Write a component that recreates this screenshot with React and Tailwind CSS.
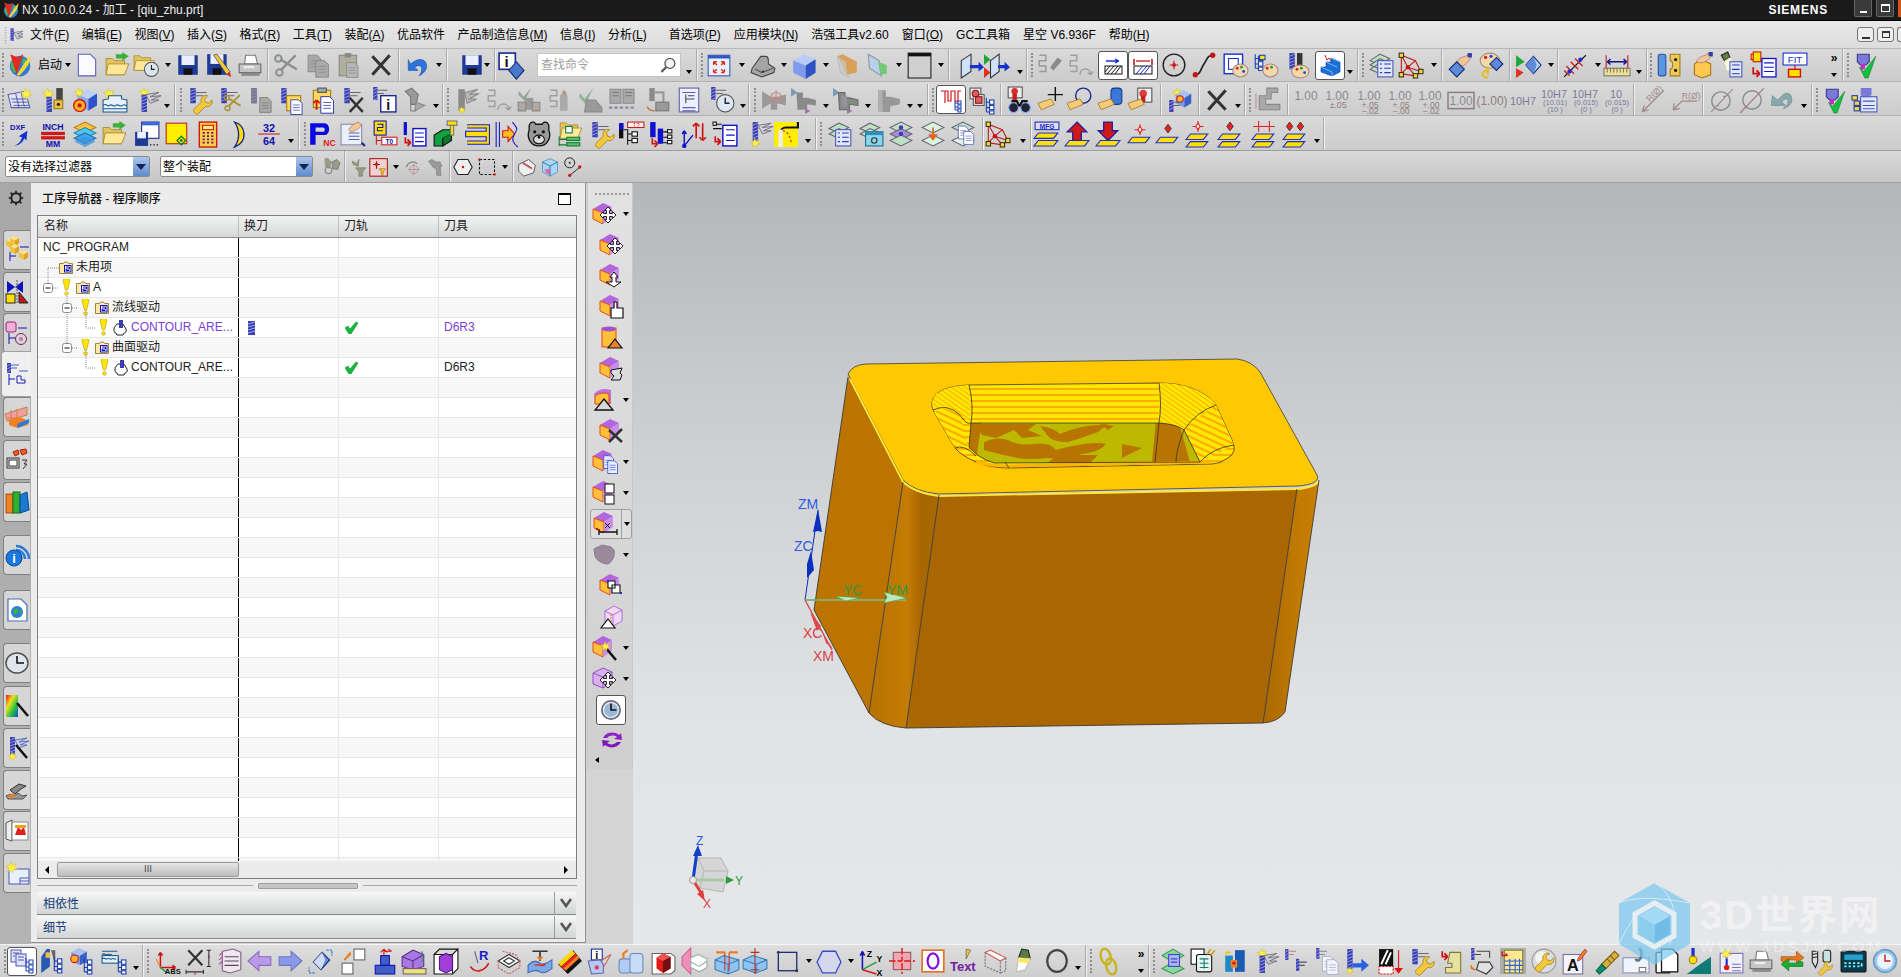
import React from 'react';

// ── small drawing parts shared by the toolbar icons ──
const T = ({ x = 0, y = 0, s = 1, children }) => <g transform={`translate(${x} ${y}) scale(${s})`}>{children}</g>;
const Drill = ({ x = 0, y = 0, w = 5, h = 16 }) => (
    <g>
        <rect x={x} y={y} width={w} height={h} fill="#3a3fb0" />
        {Array.from({ length: Math.floor(h / 3) }, (_, i) => (
            <path key={i} d={`M${x} ${+y + 3 + i * 3}l${w} -2`} stroke="#a4a8ee" strokeWidth=".8" />
        ))}
    </g>
);
const Star = ({ x = 5, y = 5, r = 5 }) => (
    <path d={`M${x} ${y - r}l${r * .25} ${r * .7} ${r * .7} -${r * .3} -${r * .3} ${r * .6} ${r * .6} ${r * .25} -${r * .7} ${r * .2} -${r * .25} ${r * .7} -${r * .3} -${r * .6} -${r * .6} ${r * .3} ${r * .2} -${r * .7} -${r * .6} -${r * .3} ${r * .7} -${r * .15}z`} fill="#ffef4a" stroke="#c8b820" strokeWidth=".4" />
);
const Cube = ({ x = 0, y = 0, s = 1, t = '#9fb8f4', l = '#7d9cec', r = '#2f55c8' }) => (
    <T x={x} y={y} s={s}>
        <path d="M0 5L9 0l9 4-8 5z" fill={t} />
        <path d="M0 5l10 4v11L0 15z" fill={l} />
        <path d="M10 9l8-5v11l-8 5z" fill={r} />
    </T>
);
const PCube = ({ x = 0, y = 0, s = 1 }) => (
    <T x={x} y={y} s={s}>
        <path d="M0 6L10 0l9 4-9 6z" fill="#b265dc" />
        <path d="M0 6l10 4v11L0 16z" fill="#ffc03a" stroke="#e8400a" strokeWidth=".9" />
        <path d="M10 10l9-6v11l-9 6z" fill="#c88ee8" />
    </T>
);
const Move4 = () => (
    <path d="M15 5l3.500 3.500h-2v3h3v-2l3.500 3.500-3.500 3.500v-2h-3v3h2L15 21l-3.500-3.500h2v-3h-3v2L7 13l3.500-3.500v2h3v-3h-2z" fill="#fff" stroke="#111" strokeWidth=".9" />
);
const Folder = ({ x = 0, y = 0, s = 1 }) => (
    <T x={x} y={y} s={s}>
        <path d="M1 5h6l2 2h9v13H1z" fill="#e4c45c" stroke="#a58a30" strokeWidth=".8" />
        <path d="M3 10h19l-4 10H1z" fill="#ffe89a" stroke="#a58a30" strokeWidth=".8" />
    </T>
);
const Doc = ({ x = 0, y = 0, s = 1, c = '#6a6ac8', f = '#fff' }) => (
    <T x={x} y={y} s={s}>
        <path d="M1 1h9l4 4v13H1z" fill={f} stroke={c} />
        <path d="M3.500 7h8M3.500 10h8M3.500 13h8" stroke={c} strokeWidth=".8" />
    </T>
);
const Wrench = ({ x = 0, y = 0, s = 1 }) => (
    <T x={x} y={y} s={s}>
        <path d="M1 15l7-7c-1-4 2-7 6-6l-3 3 1 3 3 1 3-3c1 4-2 7-6 6l-7 7c-1 1-5-2-4-4z" fill="#f4c83c" stroke="#a07a10" strokeWidth=".7" />
    </T>
);
const Fan = ({ x = 0, y = 0, c = '#6b6b78' }) => (
    <T x={x} y={y}>
        <path d="M0 2l12-2-8 4 10-1-9 4 7 0-8 3z" fill="#cfd0dc" stroke={c} strokeWidth=".8" />
    </T>
);
const Scissors = ({ x = 0, y = 0, s = 1, c = '#8a8f8a' }) => (
    <T x={x} y={y} s={s}>
        <path d="M20 2L7 15M21 15L6 6" stroke={c} strokeWidth="2.200" fill="none" />
        <circle cx="5" cy="18" r="3" fill="none" stroke={c} strokeWidth="1.800" />
        <circle cx="4" cy="5" r="3" fill="none" stroke={c} strokeWidth="1.800" />
    </T>
);
const TreeB = ({ x = 0, y = 0, c = '#1c3fb0' }) => (
    <T x={x} y={y}>
        <path d="M2 0v13M2 4h3M2 9h3M2 13h3" stroke={c} fill="none" />
        <rect x="5" y="2" width="4" height="4" fill="#fff" stroke={c} />
        <rect x="5" y="7" width="4" height="4" fill="#fff" stroke={c} />
        <rect x="5" y="12" width="4" height="3" fill="#fff" stroke={c} />
    </T>
);
const Plate = ({ x = 0, y = 0, w = 16, f = '#ffe000' }) => (
    <path d={`M${+x + 4} ${y}h${w}l-4 5h-${w}z`} fill={f} stroke="#1d2fc0" strokeWidth="1" />
);
const RedD = ({ x = 8, y = 4 }) => <path d={`M${x} ${y - 4}l3 4-3 4-3-4z`} fill="#e22" stroke="#222" strokeWidth=".7" />;
const Tag = ({ x = 0, y = 12 }) => <path d={`M${x} ${+y + 4}l12-4 3 5-12 5z`} fill="#f4cc78" stroke="#a87820" strokeWidth=".8" />;
const Lbl = ({ x, y, z = 7, c = '#000', b, a, children }) => (
    <text x={x} y={y} fontSize={z} fill={c} fontWeight={b ? 700 : 400} textAnchor={a || 'start'}>{children}</text>
);
const Dim = ({ a, b, c }) => (
    <g>
        <Lbl x="12" y="12" z="11" c="#8a8a90" a="middle">{a}</Lbl>
        {b && <Lbl x="13" y="19" z="8" c="#8f7f80" a="middle">{b}</Lbl>}
        {c && <Lbl x="13" y="25" z="8" c="#8f7f80" a="middle">{c}</Lbl>}
    </g>
);
const Fit = ({ a, b, c }) => (
    <g>
        <Lbl x="12" y="10" z="10" c="#7b7b98" a="middle">{a}</Lbl>
        <Lbl x="13" y="17" z="7" c="#7b7b98" a="middle">{b}</Lbl>
        <Lbl x="13" y="23" z="7" c="#7b7b98" a="middle">{c}</Lbl>
    </g>
);

const I = {
    logo: <g><circle cx="12" cy="13" r="9.500" fill="#2d78d8" /><path d="M4 9c4-3 6-1 7 3s-2 7-4 7c-3-2-4-6-3-10zM15 6c3 0 5 3 5 7-3 1-5-1-6-3z" fill="#49b84a" /><path d="M3 2l7 3 5-3-3 9-3 10-3-9z" fill="#e22a20" /><path d="M9 21C13 15 17 8 22 3c0 6-5 14-11 19z" fill="#f4d83a" /></g>,
    new: <path d="M4 2h11l5 5v15H4z" fill="#fafaff" stroke="#5a62c8" />,
    open: <g><Folder y="1" /><path d="M10 2h6V0l6 4-6 4V6h-6z" fill="#3fae3a" /></g>,
    recent: <g><Folder y="-1" s=".9" /><circle cx="17" cy="16" r="6.500" fill="#dce4ee" stroke="#555" /><path d="M17 12v4h3" stroke="#222" fill="none" /></g>,
    save: <g><rect x="3" y="3" width="18" height="18" fill="#1e3a94" /><rect x="6" y="3" width="12" height="9" fill="#eaf0ff" /><rect x="8" y="15" width="8" height="6" fill="#111" /></g>,
    saveas: <g><rect x="2" y="2" width="18" height="19" fill="#1e3a94" /><rect x="5" y="2" width="12" height="9" fill="#eaf0ff" /><rect x="7" y="15" width="8" height="6" fill="#111" /><path d="M8 3l3-1 12 16-3 3z" fill="#f4c83c" stroke="#333" strokeWidth=".6" /><path d="M20 21l3-3 1 5z" fill="#d22" /></g>,
    print: <g><path d="M8 3h9l2 8H7z" fill="#fff" stroke="#777" /><path d="M2 11h20v8H2z" fill="#c4c4c4" stroke="#666" /><path d="M4 19h17v3H4z" fill="#8a8a8a" /><rect x="6" y="13" width="10" height="2" fill="#eee" /></g>,
    cutG: <Scissors y="1" />,
    copyG: <g><Doc x="2" y="2" s=".9" c="#8a8a88" f="#a8a8a8" /><Doc x="9" y="7" s=".9" c="#8a8a88" f="#aaa" /></g>,
    pasteG: <g><rect x="3" y="3" width="16" height="19" fill="#b0ae9c" stroke="#888" /><rect x="8" y="1" width="6" height="4" fill="#888" /><Doc x="9" y="9" s=".8" c="#888" f="#b8b8b8" /></g>,
    xdark: <path d="M4 4l16 17M20 3L4 21" stroke="#333" strokeWidth="2.800" fill="none" />,
    undo: <g><path d="M8 9c6-4 12-2 12 4 0 4-3 7-7 9 3-4 3-8 1-9-2-1-4 0-5 1l3 3H3V7l2 4z" fill="#2c74dc" stroke="#1a4aa0" strokeWidth=".5" /></g>,
    infoD: <g><rect x="1" y="1" width="15" height="15" fill="#fff" stroke="#1a2a90" strokeWidth="1.500" /><Lbl x="8" y="14" z="14" c="#111" b a="middle">i</Lbl><path d="M17 9l7 8-7 8-7-8z" fill="#4a78cc" stroke="#122a78" /></g>,
    fit: <g><rect x="2" y="3" width="20" height="19" fill="#e8f0fc" stroke="#3558c0" /><rect x="2" y="3" width="20" height="3" fill="#3558c0" /><path d="M7 9l3 3M7 9h3M7 9v3M17 9l-3 3M17 9h-3M17 9v3M7 19l3-3M7 19h3M7 19v-3M17 19l-3-3M17 19h-3M17 19v-3" stroke="#e02a1a" strokeWidth="1.200" fill="none" /></g>,
    shadeG: <g><path d="M2 15L10 4h5c2 0 2 3 2 7l6 4-1 4-11 4-10-4z" fill="#a5a5a5" stroke="#444" /><path d="M5 16l6 3 10-4" stroke="#555" fill="none" /><circle cx="12" cy="18" r="1" fill="#333" /></g>,
    cubeB: <Cube x="2" y="2" s="1.150" t="#b9ccf6" l="#7e9bec" r="#2d52c4" />,
    orangeG: <g><path d="M4 4l5-2 13 7v10l-9 2z" fill="#d8a058" /><path d="M4 4l3 15 8 4" stroke="#bbb" fill="none" /><path d="M4 4l3 15 6 2-1-12z" fill="#c8c8c8" opacity=".7" /></g>,
    clipG: <g><path d="M4 2l10 6 2 14-11-7z" fill="#b9d0e8" stroke="#8a9aa8" /><path d="M13 9l8 3v8l-6 1z" fill="#72c878" /></g>,
    rectBox: <g><rect x="2" y="1" width="21" height="23" fill="#d0d0d0" stroke="#222" /><rect x="2" y="1" width="21" height="3" fill="#111" /></g>,
    docArr: <g><path d="M3 8l9-6v16l-9 6z" fill="#cfe0fa" stroke="#333" /><path d="M11 12h8v-3l5 5-5 4v-3h-8z" fill="#1a30d0" /></g>,
    docArr2: <g><path d="M0 2l6 5-6 5z" fill="#22a83a" /><path d="M0 14l6 5-6 5z" fill="#e03020" /><path d="M6 8l8-6v16l-8 6z" fill="#cfe0fa" stroke="#333" /><path d="M13 12h6v-3l5 5-5 4v-3h-6z" fill="#1a30d0" /></g>,
    sFlash: <g><path d="M3 3h6v5H3v5h6v5H3" stroke="#9a9a9a" strokeWidth="1.400" fill="none" /><path d="M13 14l7-9 4 3-8 9z" fill="#8a8a8a" /></g>,
    sArr: <g><path d="M3 3h6v5H3v5h6v5H3" stroke="#a0a0a0" strokeWidth="1.400" fill="none" /><path d="M12 21c0-7 10-7 10 0M22 21l-3-2M22 21l2-3" stroke="#a0a0a0" strokeWidth="1.400" fill="none" /></g>,
    cutA: <g><path d="M5 8h13M18 8l-4-2M18 8l-4 2" stroke="#1a30d0" strokeWidth="1.300" fill="none" /><rect x="4" y="13" width="17" height="8" fill="#fff" stroke="#111" /><path d="M6 21l7-8M10 21l7-8M14 21l6-8M4 19l5-6" stroke="#111" fill="none" /></g>,
    cutB: <g><path d="M5 8h14" stroke="#c01818" strokeWidth="1.300" /><path d="M3 12V6M21 12V6" stroke="#c01818" strokeWidth="1.600" /><rect x="3" y="13" width="18" height="8" fill="#fff" stroke="#111" /><path d="M5 21l7-8M9 21l7-8M13 21l6-8" stroke="#1a30d0" fill="none" /></g>,
    circR: <g><circle cx="12" cy="12" r="10" fill="none" stroke="#222" strokeWidth="1.300" /><circle cx="12" cy="12" r="1.800" fill="#d01818" /><path d="M12 8v8M8 12h8" stroke="#d01818" /></g>,
    curveR: <g><path d="M4 21c5 0 5-6 8-10 3-4 3-8 8-8" stroke="#222" strokeWidth="1.600" fill="none" /><circle cx="4" cy="21" r="2.500" fill="#c01818" /><circle cx="20" cy="3" r="2.500" fill="#c01818" /></g>,
    palette: <g><rect x="2" y="2" width="17" height="18" fill="#fff" stroke="#1a30d0" strokeWidth="1.300" /><rect x="6" y="6" width="9" height="10" fill="none" stroke="#1a30d0" /><ellipse cx="17" cy="17" rx="7" ry="6" fill="#f0d8a8" stroke="#a88" /><circle cx="14" cy="15" r="1.300" fill="#e02020" /><circle cx="18" cy="14" r="1.300" fill="#20a030" /><circle cx="20" cy="18" r="1.300" fill="#2040e0" /></g>,
    treePal: <g><TreeB x="1" y="2" /><rect x="7" y="3" width="5" height="4" fill="#ffe000" stroke="#1c3fb0" /><ellipse cx="17" cy="17" rx="7" ry="6" fill="#f0d8a8" stroke="#a88" /><circle cx="14" cy="15" r="1.300" fill="#e02020" /><circle cx="18" cy="14" r="1.300" fill="#20a030" /></g>,
    millPal: <g><Drill x="5" y="1" w="5" h="15" /><rect x="12" y="1" width="5" height="13" fill="#333" /><ellipse cx="15" cy="18" rx="8" ry="6" fill="#f0d8a8" stroke="#a88" /><circle cx="12" cy="16" r="1.300" fill="#e02020" /><circle cx="16" cy="15" r="1.300" fill="#20a030" /><circle cx="19" cy="19" r="1.300" fill="#2040e0" /></g>,
    stairs: <g><path d="M3 14h5v-5h5V5l9 4v10l-8 4-11-4z" fill="#1a70d8" stroke="#0a3a90" strokeWidth=".6" /><path d="M3 14l11 5v4M8 9l11 5M13 5l9 4" stroke="#7ab8f4" fill="none" /><path d="M7 2l2 5 2-2 2 3" stroke="#d02020" fill="none" /></g>,
    layersList: <g><path d="M2 8l9-6 9 4-9 6z" fill="#bde2c4" stroke="#667" /><path d="M2 12l9-6 9 4-9 6zM2 16l9-6 9 4-9 6z" fill="#bde2c4" stroke="#667" /><rect x="9" y="8" width="14" height="15" fill="#e2e8fc" stroke="#4a58b8" /><path d="M11 11h2M15 11h6M11 15h2M15 15h6M11 19h2M15 19h6" stroke="#2a38a8" /></g>,
    polyNet: <g><path d="M4 3l13 5 5 10-5 4-13-2zM4 3l6 11 7-6M10 14l-6 6M10 14l7 8M10 14l12 4" stroke="#c01818" fill="none" /><g fill="#ffd830" stroke="#331"><rect x="2" y="1" width="4" height="4" /><rect x="2" y="19" width="4" height="4" /><rect x="15" y="20" width="4" height="4" /><rect x="20" y="16" width="4" height="4" /></g><circle cx="10" cy="14" r="2" fill="#c01818" /></g>,
    handD: <g><path d="M9 11c1-6 5-6 8-7l3-2 2 3-2 3c-2 3-4 5-7 5z" fill="#f0c898" stroke="#a66" strokeWidth=".6" /><rect x="19" y="1" width="4" height="4" fill="#3040a8" /><path d="M9 11l7 7-7 7-7-7z" fill="#5e8ad8" stroke="#102a78" transform="translate(0 -2)" /></g>,
    palKey: <g><ellipse cx="11" cy="8" rx="9" ry="7" fill="#f4dca8" stroke="#a88" /><circle cx="7" cy="5" r="1.500" fill="#e02020" /><circle cx="12" cy="4" r="1.500" fill="#2040e0" /><path d="M17 5l6 6-6 6-6-6z" fill="#5e8ad8" stroke="#102a78" /><path d="M9 13v8M9 23a3 3 0 1 1 0-5" stroke="#e8bc30" strokeWidth="2" fill="none" /></g>,
    playD: <g><path d="M1 3l8 6-8 5z" fill="#20a83a" /><path d="M1 15l7 4-7 5z" fill="#e03020" /><path d="M17 4l7 8-7 8-7-8z" fill="#c0d0f4" stroke="#102a78" /><path d="M17 4l3 8-3 8-7-8z" fill="#5e8ad8" /></g>,
    antenna: <g><path d="M2 23L22 3" stroke="#111" /><path d="M4 13l7 7M8 9l7 7M12 6l7 7M2 17l5 5" stroke="#d02020" strokeWidth="1.300" /><circle cx="17" cy="7" r="2" fill="#1a30d0" /><circle cx="7" cy="18" r="2" fill="#1a30d0" /></g>,
    rulerDim: <g><path d="M3 9h18M3 9l3-2.500M3 9l3 2.500M21 9l-3-2.500M21 9l-3 2.500" stroke="#10108a" strokeWidth="1.400" fill="none" /><path d="M2 3v12M22 3v12" stroke="#c01818" /><rect x="0" y="15" width="24" height="7" fill="#f0e090" stroke="#777" /><path d="M3 15v4M6 15v4M9 15v4M12 15v4M15 15v4M18 15v4M21 15v4" stroke="#555" strokeWidth=".7" /></g>,
    tube: <g><rect x="3" y="2" width="7" height="20" rx="2" fill="#5a96e0" stroke="#2a50a0" /><path d="M14 2h9v20h-9v-6c3 0 3-8 0-8z" fill="#f0c858" stroke="#a07a10" /><circle cx="19" cy="7" r="1.500" fill="#222" /><circle cx="19" cy="17" r="1.500" fill="#222" /></g>,
    handBox: <g><path d="M5 11l6-4 9 4v10l-8 3-7-3z" fill="#ffc850" stroke="#b07010" /><path d="M7 9c1-4 5-5 8-6l3-2 3 3-3 3c-3 2-5 3-8 3z" fill="#f0c898" stroke="#a66" strokeWidth=".6" /><rect x="18" y="0" width="4" height="4" fill="#3040a8" /></g>,
    lightList: <g><path d="M3 3l6-3 2 5-5 3z" fill="#5e8040" stroke="#223" /><path d="M6 8l5-3 8 12H8z" fill="#fffbd0" /><rect x="11" y="9" width="11" height="14" fill="#e2e8fc" stroke="#4a58b8" /><path d="M13 12h7M13 16h7M13 20h7" stroke="#2a38a8" /></g>,
    redList: <g><rect x="1" y="2" width="7" height="5" fill="#ffe000" stroke="#d01010" /><rect x="3" y="0" width="7" height="9" fill="#ffe000" stroke="#d01010" /><path d="M3 14v6h6M9 20l-3-3M9 20l-3 3" stroke="#d01010" strokeWidth="1.600" fill="none" /><rect x="11" y="6" width="13" height="17" fill="#fff" stroke="#1010d0" strokeWidth="1.200" /><path d="M13 10h9M13 14h9M13 18h9" stroke="#1010d0" /></g>,
    fitBox: <g><rect x="1" y="1" width="22" height="11" fill="#fff" stroke="#1a30d0" /><Lbl x="12" y="10" z="9" c="#1a30d0" a="middle">FIT</Lbl><path d="M12 12v4" stroke="#d01010" /><rect x="6" y="16" width="11" height="7" fill="#ffe000" stroke="#d01010" strokeWidth="1.300" /></g>,
    check: <g><path d="M4 2h11v7l-3 3h-5l-3-3z" fill="#7a78d8" stroke="#3a3a8a" /><rect x="7" y="11" width="4" height="5" fill="#c030c0" /><path d="M6 14l4 4 11-14-7 20-3 0z" fill="#12c040" stroke="#0a7a28" strokeWidth=".5" /></g>,
    checkTree: <g><path d="M8 1h10v6l-2 3h-6l-2-3z" fill="#7a78d8" /><rect x="10" y="10" width="4" height="3" fill="#c030c0" /><rect x="8" y="9" width="15" height="14" fill="#e2e8fc" stroke="#4a58b8" /><path d="M10 13h11M10 17h11M10 20h11" stroke="#4a58b8" /><rect x="0" y="8" width="5" height="4" fill="#ffd830" stroke="#1c3fb0" /><rect x="2" y="13" width="5" height="4" fill="#ffd830" stroke="#1c3fb0" /><rect x="2" y="18" width="5" height="4" fill="#ffd830" stroke="#1c3fb0" /></g>,

    sheet: <g><path d="M1 7l16-3 4 15H4z" fill="#dfe4f8" stroke="#5a62a8" /><path d="M4 11h14M5 14h14M6 17h14M8 6l3 13M13 5l3 13" stroke="#4a4a9a" strokeWidth=".8" /><Star x="17" y="6" /></g>,
    millKey: <g><Star x="7" y="6" r="5" /><Drill x="6" y="9" w="5" h="14" /><rect x="15" y="1" width="6" height="14" fill="#444" /><rect x="13" y="12" width="8" height="8" fill="#f0c040" stroke="#9a7a10" /><circle cx="17" cy="16" r="1.500" fill="#222" /></g>,
    cubeBomb: <g><Cube x="6" y="2" t="#bcd0f4" l="#8aa8ec" r="#2a54c8" /><circle cx="8" cy="17" r="5.500" fill="#ffb428" stroke="#d01818" strokeWidth="1.300" /><circle cx="8" cy="17" r="2" fill="#d01818" /><Star x="7" y="5" r="4" /></g>,
    water: <g><Star x="6" y="6" r="5" /><path d="M1 12l5-1v-3h12v3l5 1v11H1z" fill="#e8f0fa" stroke="#1a5a8a" /><path d="M1 17c3-3 4 2 6 0s4 2 6 0 4 2 6 0 3 1 4 0M1 20h22" stroke="#1a5a8a" fill="none" /></g>,
    millFan: <g><Star x="9" y="5" r="4.500" /><Drill x="7" y="7" w="5" h="16" /><Fan x="11" y="5" /></g>,
    millWr: <g><Drill x="4" y="1" w="5" h="14" /><path d="M9 5h10M9 8h7" stroke="#667" /><Wrench x="6" y="6" /></g>,
    millSc: <g><Drill x="4" y="1" w="5" h="14" /><path d="M9 5h10M9 8h7" stroke="#667" /><Scissors x="6" y="6" s=".75" c="#a89230" /></g>,
    millCopyG: <g><Drill x="4" y="1" w="5" h="14" /><rect x="4" y="1" width="5" height="14" fill="#8a8a8a" opacity=".8" /><Doc x="11" y="9" s=".8" c="#777" f="#aaa" /></g>,
    millPaste: <g><Drill x="3" y="1" w="5" h="14" /><rect x="8" y="8" width="13" height="14" fill="#ffd860" stroke="#a07a10" /><Doc x="11" y="11" s=".8" c="#2a38a8" /></g>,
    pasteArr: <g><rect x="4" y="3" width="16" height="16" fill="#ffd860" stroke="#a07a10" /><rect x="8" y="1" width="8" height="4" fill="#9aa" stroke="#555" /><Doc x="10" y="8" s=".9" c="#2a38a8" /><path d="M7 12v9M7 12l-3 3M7 12l3 3" stroke="#d01010" strokeWidth="1.600" fill="none" /></g>,
    millX: <g><Drill x="4" y="1" w="5" h="14" /><path d="M9 5h10M9 8h7" stroke="#667" /><path d="M9 10l12 13M21 10L9 23" stroke="#333" strokeWidth="2.200" /></g>,
    millInfo: <g><Drill x="2" y="0" w="4" h="12" /><path d="M6 3h9M6 6h6" stroke="#667" /><rect x="9" y="8" width="14" height="15" fill="#fff" stroke="#1a2a90" strokeWidth="1.300" /><Lbl x="16" y="21" z="13" c="#111" b a="middle">i</Lbl></g>,
    toolG: <g><path d="M3 4l6-3 6 6-2 9H8V9z" fill="#9a9a9a" stroke="#777" /><path d="M13 14l8 3-9 5z" fill="#aaa" stroke="#888" /><path d="M8 16v6h5" stroke="#888" fill="none" /></g>,
    fanG: <g><rect x="4" y="2" width="6" height="20" fill="#8a8a8a" /><path d="M10 5l12-3-8 5 9-1-9 5 7 0-9 4z" fill="#b8b8b8" stroke="#8a8a8a" /><Star x="7" y="21" r="3" /></g>,
    checkBox: <g><path d="M3 4l4 5 7-8-6 12-6-6z" fill="#8fa88f" /><rect x="8" y="10" width="8" height="11" fill="#9a9a9a" /><path d="M2 14h7v8H2zM15 14h7v8h-7z" fill="#b0a8a0" stroke="#888" /></g>,
    sDoc: <g><path d="M3 3h6v5H3v5h6v5H3" stroke="#a0a0a0" strokeWidth="1.400" fill="none" /><path d="M12 8l4-6 3 6v14h-7z" fill="#aaa" /><path d="M14 3l4 2-2 4z" fill="#c09080" /></g>,
    checkMach: <g><path d="M2 6l4 5 8-10-7 15-6-7z" fill="#8fb09a" /><path d="M8 12h8l6 7v4H6z" fill="#9a9a9a" stroke="#888" /></g>,
    booksG: <g><path d="M1 2h10v13H1zM13 2h10v13H13z" fill="#aaa" stroke="#888" /><path d="M3 5h6M3 8h6M15 5h6M15 8h6" stroke="#777" /><path d="M0 19h24" stroke="#88a" strokeWidth="2" strokeDasharray="3 2" /></g>,
    machG: <g><rect x="4" y="1" width="5" height="12" fill="#8a8a8a" /><path d="M9 5h8v10" stroke="#999" strokeWidth="2" fill="none" /><rect x="10" y="14" width="12" height="8" fill="#9a9a9a" stroke="#777" /><path d="M2 18c1 3 3 4 7 4" stroke="#c08060" strokeWidth="1.500" fill="none" /></g>,
    docTool: <g><rect x="3" y="1" width="18" height="22" fill="#eef" stroke="#5a62a8" /><path d="M6 5h12M6 19h12M6 22h12" stroke="#5a62a8" /><path d="M9 7v8M9 11h8M11 8h6" stroke="#445" fill="none" /></g>,
    millClock: <g><Drill x="2" y="0" w="4" h="12" /><path d="M6 3h10M6 6h7" stroke="#667" /><circle cx="15" cy="15" r="8" fill="#dce8f4" stroke="#555" /><path d="M15 10v5h4" stroke="#222" strokeWidth="1.300" fill="none" /></g>,
    targetG: <g><path d="M1 4l8 5h6l8-2v10l-8-2v6H9v-6l-8 5z" fill="#999" /><circle cx="14" cy="10" r="5" fill="none" stroke="#c08a8a" /><path d="M14 3v14M7 10h14" stroke="#c08a8a" /></g>,
    toolA: <g><path d="M0 1l6 4-6 4z" fill="#7a9ab8" /><path d="M5 5h6v5h4l8 2v5l-8-1v5H6z" fill="#8a8a8a" /><path d="M13 20l5 2-5 3z" fill="#a070a8" /></g>,
    toolB: <g><path d="M0 1l6 4-6 4z" fill="#7a9ab8" /><path d="M5 5h6v5h4l8 2v5l-8-1v5H6z" fill="#888" stroke="#666" /><path d="M8 8h5v10H8z" fill="#9494a0" /><path d="M13 20l5 2-5 3z" fill="#a070a8" /></g>,
    toolC: <g><path d="M3 3h7v6h4l9 2v5l-9 2v5H8L3 20z" fill="#989898" /><path d="M3 3h4v20H3z" fill="#b0b0b0" /></g>,
    tree: <g><path d="M2 3h4v12M6 3h3v10h3V3h4v10h3V3h3" stroke="#d01818" strokeWidth="1.200" fill="none" /><path d="M16 13v9M16 15h3M16 19h3M16 22h3" stroke="#1c3fb0" fill="none" /><rect x="19" y="13" width="3" height="3" fill="#fff" stroke="#1c3fb0" /><rect x="19" y="17" width="3" height="3" fill="#fff" stroke="#1c3fb0" /><rect x="19" y="21" width="3" height="3" fill="#fff" stroke="#1c3fb0" /></g>,
    treeBolts: <g><g fill="#eee" stroke="#555"><rect x="1" y="1" width="10" height="10" /><rect x="4" y="7" width="10" height="10" /></g><g fill="#d86060" stroke="#901010"><circle cx="6" cy="6" r="3" /><rect x="6" y="9" width="6" height="6" /></g><TreeB x="14" y="10" /></g>,
    binoc: <g><rect x="2" y="0" width="13" height="10" fill="#eee" stroke="#555" /><circle cx="8" cy="4" r="3" fill="#d83030" /><rect x="6" y="6" width="4" height="6" fill="#c02020" /><circle cx="7" cy="19" r="4.500" fill="#223" stroke="#8af" /><circle cx="18" cy="19" r="4.500" fill="#223" stroke="#8af" /><path d="M5 13h5l2 4h1l2-4h5" stroke="#111" strokeWidth="2" fill="none" /></g>,
    tagPlus: <g><path d="M16 0v13M9 7h14" stroke="#111" strokeWidth="1.300" /><Tag y="11" /></g>,
    tagO: <g><circle cx="15" cy="8" r="7" fill="none" stroke="#1a2a90" strokeWidth="1.300" /><Tag y="11" /></g>,
    tagCyl: <g><rect x="12" y="1" width="10" height="15" rx="3" fill="#3a78d8" stroke="#1a3a90" /><Tag y="11" /></g>,
    tagBox: <g><rect x="9" y="1" width="13" height="13" fill="#eee" stroke="#555" /><circle cx="14" cy="6" r="3.500" fill="#d84040" /><rect x="12" y="8" width="4" height="6" fill="#c02020" /><Tag y="11" /></g>,
    cubeFan: <g><Star x="9" y="5" r="4" /><Cube x="8" y="3" s=".8" t="#a8c0f0" l="#7a9ae8" r="#3a60c8" /><circle cx="12" cy="11" r="3" fill="#ffb428" stroke="#d01818" /><Drill x="2" y="12" w="4" h="11" /><path d="M6 14h8M6 17h6" stroke="#667" /></g>,
    bracket: <g><path d="M3 16V8h7V1h10v4h-6v6H9v5h13v5H3z" fill="#a8a8a8" stroke="#888" /><path d="M0 6v14" stroke="#c09090" /></g>,
    d1: <Dim a="1.00" />,
    d2: <Dim a="1.00" b="±.05" />,
    d3: <Dim a="1.00" b="+.05" c="−.02" />,
    d4: <Dim a="1.00" b="+.05" c="−.00" />,
    d5: <Dim a="1.00" b="+.00" c="−.02" />,
    d6: <g><rect x="0" y="5" width="24" height="15" fill="none" stroke="#8a7a7a" strokeWidth="1.300" /><Lbl x="12" y="17" z="11" c="#8a8a90" a="middle">1.00</Lbl></g>,
    d7: <Lbl x="12" y="17" z="11" c="#8f7f80" a="middle">(1.00)</Lbl>,
    d8: <Lbl x="12" y="17" z="10" c="#7b7b98" a="middle">10H7</Lbl>,
    d9: <Fit a="10H7" b="(10.01)" c="(10   )" />,
    d10: <Fit a="10H7" b="(0.015)" c="(0     )" />,
    d11: <Fit a="10" b="(0.015)" c="(0     )" />,
    rA: <g><path d="M2 23L22 3M2 23l6-2M2 23l2-6" stroke="#a08a8a" fill="none" strokeWidth="1.200" /><text x="0" y="0" fontSize="8" fill="#a08a8a" transform="translate(9 14) rotate(-45)">R(Ø)</text></g>,
    rB: <g><path d="M2 21l8-8h14M2 21l6-1M2 21l1-6" stroke="#a08a8a" fill="none" strokeWidth="1.200" /><Lbl x="10" y="11" z="8" c="#a08a8a">R(Ø)</Lbl></g>,
    dia: <g><circle cx="11" cy="13" r="8.500" fill="none" stroke="#8a8a8a" strokeWidth="1.300" /><path d="M2 23L22 2M6 18l3-1M16 8l-3 1" stroke="#9a8a8a" /></g>,
    noDia: <g><circle cx="12" cy="12" r="8.500" fill="none" stroke="#8a8a8a" strokeWidth="1.300" /><path d="M1 24L23 1" stroke="#a08080" strokeWidth="1.200" /></g>,
    backG: <path d="M9 12l5-5c5-3 8 0 8 5 0 4-4 7-8 8l3-3c2-2 2-6 0-6-2 0-4 2-4 3l3 3H3l1-9z" fill="#87a8ac" stroke="#6a8a8e" strokeWidth=".6" />,

    dxf: <g><Lbl x="1" y="8" z="7" c="#1010b0" b>DXF</Lbl><path d="M5 23c4-2 6-4 7-8l-3-1 8-5-1 9-2-2c-1 3-3 6-9 7z" fill="#1030d0" /></g>,
    inch: <g><Lbl x="12" y="8" z="8" c="#1010b0" b a="middle">INCH</Lbl><rect x="1" y="10" width="22" height="3" fill="#d01818" /><rect x="1" y="14" width="22" height="3" fill="#d01818" /><Lbl x="12" y="24" z="8" c="#1010b0" b a="middle">MM</Lbl></g>,
    layers: <g><path d="M2 6l10-5 10 5-10 5z" fill="#ffc040" stroke="#b08020" /><path d="M2 11l10-5 10 5-10 5z" fill="#50c8f0" stroke="#2088b8" /><path d="M2 16l10-5 10 5-10 5z" fill="#40a8e8" stroke="#2070b0" /><path d="M2 19l10-5 10 5-10 5z" fill="#3a90e0" opacity=".7" /></g>,
    saveWin: <g><rect x="7" y="1" width="16" height="15" fill="#fff" stroke="#1a2a90" /><rect x="7" y="1" width="16" height="3" fill="#3a68d8" /><rect x="1" y="10" width="12" height="13" fill="#1e3a94" /><rect x="3" y="10" width="8" height="6" fill="#eaf0ff" /><path d="M15 22h1M18 22h1M21 22h1" stroke="#111" strokeWidth="1.400" /></g>,
    yellowSq: <g><rect x="2" y="2" width="19" height="19" fill="#ffee00" stroke="#c02020" /><path d="M16 14l4 4-4 4-4-4z" fill="none" stroke="#107a30" strokeWidth="1.200" /><circle cx="16" cy="18" r="1.300" fill="#107a30" /></g>,
    calc: <g><rect x="4" y="1" width="16" height="23" fill="#ffd040" stroke="#d01818" strokeWidth="1.300" /><rect x="7" y="4" width="10" height="4" fill="#ffe890" stroke="#d01818" /><path d="M7 11h2M11 11h2M15 11h2M7 14h2M11 14h2M15 14h2M7 17h2M11 17h2M15 17h2M7 20h2M11 20h2M15 20h2" stroke="#601880" strokeWidth="1.600" /></g>,
    moon: <path d="M7 1c10 2 13 18 0 23 5-7 5-16 0-23z" fill="#ffe000" stroke="#1a2a90" strokeWidth="1.300" />,
    frac: <g><Lbl x="12" y="10" z="10" c="#1010b0" b a="middle">32</Lbl><path d="M2 12h20" stroke="#d01818" /><Lbl x="12" y="22" z="10" c="#1010b0" b a="middle">64</Lbl></g>,
    pnc: <g><path d="M2 2h13c6 0 6 11 0 11H7v9H2zM7 6v4h7c2 0 2-4 0-4z" fill="#0a0ae0" /><Lbl x="14" y="23" z="8" c="#e02020" b>NC</Lbl></g>,
    handForm: <g><rect x="1" y="3" width="19" height="19" fill="#e8f0fc" stroke="#8a8aa8" /><path d="M8 11h10M8 14h10M8 17h10" stroke="#5a62a8" /><path d="M8 8c2-4 6-6 9-7l3 3c-2 3-5 5-10 6z" fill="#f0c898" stroke="#a66" strokeWidth=".6" /><path d="M20 20l3 3" stroke="#1a2a90" strokeWidth="2" /></g>,
    tBox: <g><rect x="2" y="0" width="11" height="13" fill="#ffe000" stroke="#1010b0" /><path d="M5 3h5v3H5v3h5" stroke="#1010b0" fill="none" /><path d="M4 13v9M4 18h5" stroke="#d01818" /><rect x="9" y="15" width="14" height="7" fill="#fff" stroke="#d01818" /><Lbl x="16" y="21" z="6" c="#1010b0" b a="middle">T0</Lbl></g>,
    listArr: <g><path d="M4 1v12" stroke="#1010d0" strokeWidth="3" /><path d="M4 15v5h5M9 20l-3-3M9 20l-3 3" stroke="#d01010" strokeWidth="1.500" fill="none" /><rect x="11" y="7" width="12" height="16" fill="#fff" stroke="#1010d0" strokeWidth="1.300" /><path d="M13 11h8M13 15h8M13 19h8" stroke="#1010d0" /></g>,
    greenBox: <g><path d="M2 13l8-5h7l1 4-8 4v7H2z" fill="#12a040" stroke="#111" /><path d="M10 16v7l8-5v-6" fill="#0a7a28" stroke="#111" /><rect x="14" y="0" width="9" height="4" fill="#ffe000" stroke="#777" /><rect x="17" y="4" width="3" height="9" fill="#ffe000" stroke="#777" /></g>,
    sShape2: <g><path d="M3 5h19v6H3v2h19v7H3" fill="none" stroke="#1a1ac8" strokeWidth="4" /><path d="M3 5h19v6H3v2h19v7H3" fill="none" stroke="#ffe000" strokeWidth="2" /></g>,
    arrowWave: <g><path d="M2 1v23M5 1v23" stroke="#1a1ac8" /><path d="M8 9h5V5l6 7-6 7v-4H8z" fill="#ffc020" stroke="#d01818" /><path d="M17 1c5 6 5 6 2 11s-2 8 3 12" stroke="#1a1ac8" fill="none" /></g>,
    bear: <g><path d="M4 2a3 3 0 0 1 5 1h6a3 3 0 0 1 5-1c2 2 1 4 1 6 3 8-2 15-9 15S0 16 3 8c0-2-1-4 1-6z" fill="#999" stroke="#111" strokeWidth="1.200" /><circle cx="8" cy="10" r="1.500" fill="#111" /><circle cx="16" cy="10" r="1.500" fill="#111" /><ellipse cx="12" cy="17" rx="5" ry="4" fill="#ddd" stroke="#111" /><circle cx="12" cy="15" r="1.300" fill="#111" /></g>,
    folderTree: <g><Folder y="-3" x="2" s=".95" /><rect x="8" y="5" width="6" height="6" fill="#fff" stroke="#107a30" /><path d="M2 14v9M2 17h7M2 22h7" stroke="#107a30" fill="none" /><rect x="9" y="15" width="12" height="3" fill="#5ac070" stroke="#107a30" /><rect x="9" y="20" width="12" height="3" fill="#5ac070" stroke="#107a30" /></g>,
    mTree: <g><rect x="0" y="2" width="4" height="14" fill="#111" /><rect x="0" y="2" width="4" height="6" fill="#1010d0" /><path d="M4 8h4v14M8 12h4M8 18h4" stroke="#111" fill="none" /><rect x="8" y="1" width="15" height="5" fill="#fff" stroke="#d01818" /><Lbl x="16" y="6" z="6" c="#d01818" a="middle">12</Lbl><rect x="12" y="10" width="5" height="4" fill="#fff" stroke="#111" /><rect x="12" y="16" width="5" height="4" fill="#fff" stroke="#111" /></g>,
    barTree: <g><rect x="2" y="1" width="5" height="14" fill="#1010d0" /><path d="M4 16v5h5M9 21l-3-3M9 21l-3 3" stroke="#d01010" strokeWidth="1.500" fill="none" /><rect x="9" y="7" width="5" height="14" fill="#1010d0" /><path d="M14 10h4M14 15h4M14 20h4" stroke="#111" /><rect x="18" y="8" width="4" height="3" fill="#fff" stroke="#111" /><rect x="18" y="13" width="4" height="3" fill="#fff" stroke="#111" /><rect x="18" y="18" width="4" height="3" fill="#fff" stroke="#111" /></g>,
    axesArr: <g><path d="M3 23V9M3 9L1 12M3 9l2 3M3 23l8-10" stroke="#1010d0" strokeWidth="1.300" fill="none" /><circle cx="3" cy="23" r="2" fill="#1010d0" /><path d="M14 16V2M14 2l-3 3M14 2l3 3" stroke="#d01010" strokeWidth="1.500" fill="none" /><path d="M20 2v16M20 18l-3-3M20 18l3-3" stroke="#d01010" strokeWidth="1.500" fill="none" /></g>,
    listTree: <g><rect x="1" y="1" width="3" height="3" fill="#fff" stroke="#111" /><path d="M4 3h5M4 7h5M1 7h3" stroke="#111" /><path d="M3 14v5h5M8 19l-3-3M8 19l-3 3" stroke="#d01010" strokeWidth="1.500" fill="none" /><rect x="10" y="4" width="13" height="19" fill="#fff" stroke="#1010d0" strokeWidth="1.300" /><path d="M13 8h8M13 13h8M13 18h8" stroke="#1010d0" /></g>,
    millStar: <g><Drill x="8" y="1" w="5" h="18" /><Fan x="13" y="2" /><Star x="10" y="20" r="4" /></g>,
    curveY: <g><rect x="1" y="1" width="22" height="23" fill="#ffee00" /><path d="M7 24V11c0-3 2-5 5-5h11V1" fill="none" stroke="#111" strokeWidth="2" /><rect x="5" y="8" width="4" height="16" fill="#eee" /><path d="M9 9c4 0 7 5 8 12" stroke="#d01818" strokeDasharray="2 2" fill="none" /></g>,
    layL: <g><path d="M2 7l9-5 9 4-9 5z" fill="#bde2c4" stroke="#667" /><path d="M2 12l9-5 9 4-9 5z" fill="#bde2c4" stroke="#667" /><rect x="8" y="8" width="14" height="15" fill="#e2e8fc" stroke="#4a58b8" /><path d="M10 11h2M14 11h6M10 15h2M14 15h6M10 19h2M14 19h6" stroke="#2a38a8" /></g>,
    layW: <g><path d="M2 7l9-5 9 4-9 5z" fill="#bde2c4" stroke="#667" /><path d="M2 12l9-5 9 4-9 5z" fill="#bde2c4" stroke="#667" /><rect x="7" y="10" width="16" height="13" fill="#8ad4ec" stroke="#1a6a90" /><rect x="7" y="10" width="16" height="3" fill="#2a90b8" /><circle cx="15" cy="18" r="2.500" fill="none" stroke="#333" /></g>,
    layS: <g><path d="M2 6l10-5 10 5-10 5z" fill="#bde2c4" stroke="#667" /><path d="M2 12l10-5 10 5-10 5z" fill="#a090d8" stroke="#667" /><path d="M2 18l10-5 10 5-10 5z" fill="#bde2c4" stroke="#667" /><circle cx="12" cy="6" r="2" fill="#5030b0" /><circle cx="12" cy="12" r="2" fill="#5030b0" /></g>,
    layD: <g><path d="M2 6l10-5 10 5-10 5z" fill="#d8f4dc" stroke="#667" /><path d="M2 18l10-5 10 5-10 5z" fill="#d8f4dc" stroke="#667" /><path d="M12 6v9M12 17l-3-4h6z" fill="#e06020" stroke="#e06020" strokeWidth="1.500" /></g>,
    layDoc: <g><path d="M2 6l10-5 10 5-10 5z" fill="#bde2c4" stroke="#667" /><path d="M2 18l10-5 10 5-10 5z" fill="#e2f4e4" stroke="#667" /><Doc x="7" y="4" s=".7" c="#4a58b8" /><Doc x="12" y="9" s=".7" c="#4a58b8" /></g>,
    mfg: <g><rect x="1" y="1" width="22" height="7" fill="#dde" stroke="#1d2fc0" /><Lbl x="12" y="7" z="6" c="#1d2fc0" b a="middle">MFG</Lbl><Plate x="0" y="11" w="18" /><Plate x="0" y="18" w="18" /></g>,
    upY: <g><path d="M12 1l9 9h-5v8H8v-8H3z" fill="#d01818" stroke="#2020a0" strokeWidth="1.200" /><Plate x="1" y="18" w="18" /></g>,
    downY: <g><path d="M12 18l9-9h-5V1H8v8H3z" fill="#d01818" stroke="#2020a0" strokeWidth="1.200" /><Plate x="1" y="18" w="18" /></g>,
    sp1: <g><path d="M12 3v10M7 8h10" stroke="#e02020" /><path d="M12 5l2 3-2 3-2-3z" fill="#fff" stroke="#e02020" /><Plate x="1" y="15" w="16" /></g>,
    sp2: <g><RedD x="12" y="7" /><Plate x="1" y="15" w="16" /></g>,
    sp3: <g><path d="M12 0v10M7 5h10" stroke="#e02020" /><path d="M12 2l2 3-2 3-2-3z" fill="#fff" stroke="#e02020" /><Plate x="1" y="12" w="16" /><Plate x="1" y="19" w="16" /></g>,
    sp4: <g><RedD x="12" y="5" /><Plate x="1" y="12" w="16" /><Plate x="1" y="19" w="16" /></g>,
    sp5: <g><path d="M7 0v10M2 5h10M17 0v10M12 5h10" stroke="#e02020" /><Plate x="1" y="12" w="16" /><Plate x="1" y="19" w="16" /></g>,
    sp6: <g><RedD x="7" y="5" /><RedD x="17" y="5" /><Plate x="1" y="12" w="16" /><Plate x="1" y="19" w="16" /></g>,

    bolts: <g><path d="M4 2l4-1 5 5-3 8-5-2z" fill="#9a9a8a" /><path d="M13 6l6-3 4 4-3 8-6-1z" fill="#9a9a8a" stroke="#777" /><circle cx="9" cy="16" r="4" fill="none" stroke="#888" strokeWidth="1.500" /></g>,
    filtG: <g><path d="M4 5l5 3 3-5-1 8-6-2zM8 13h12l-4 5v5h-4v-5z" fill="#9a9a88" stroke="#80806a" /></g>,
    filtF: <g><rect x="1" y="2" width="21" height="21" fill="#f0d0d0" stroke="#a01010" strokeWidth="1.200" /><path d="M9 5v9M5 9h8" stroke="#8a1010" strokeWidth="1.300" /><circle cx="9" cy="9" r="2" fill="#c02020" /><path d="M12 14h8l-3 4v4h-2v-4z" fill="#f0c020" stroke="#8a7010" strokeWidth=".6" /></g>,
    rotG: <g><path d="M17 8a8 8 0 0 0-13 4" stroke="#888" fill="none" strokeWidth="1.500" /><circle cx="13" cy="15" r="5" fill="none" stroke="#b09090" /><path d="M13 8v14M6 15h14" stroke="#b09090" /></g>,
    toolG2: <g><path d="M3 5l4-2 5 3h5l2 5-2 1 1 10h-5l-1-9H9z" fill="#999" stroke="#888" /></g>,
    hexO: <g><path d="M6 3h12l5 9-5 9H6l-5-9z" fill="#eee" stroke="#222" strokeWidth="1.300" /><circle cx="12" cy="12" r="1.500" fill="#d01818" /></g>,
    dashSq: <g><rect x="3" y="3" width="18" height="18" fill="none" stroke="#111" strokeWidth="1.300" strokeDasharray="3 2" /><circle cx="3" cy="3" r="1.500" fill="#d01818" /><circle cx="21" cy="21" r="1.500" fill="#d01818" /></g>,
    boxG: <g><path d="M2 9l12-6 8 7-2 9-12 4-6-6z" fill="#eee" stroke="#445" /><path d="M7 7l11 7" stroke="#c06060" strokeWidth="2.500" /></g>,
    cubeC: <g><path d="M3 6l9-4 9 4v12l-9 5-9-5z" fill="#a8d8f4" stroke="#5a90c0" /><path d="M3 6l9 5 9-5M12 11v12" stroke="#1a60a0" fill="none" /><path d="M5 15l6-1 2 7-5-1z" fill="#e84090" opacity=".7" /></g>,
    pointLine: <g><circle cx="8" cy="7" r="6" fill="none" stroke="#222" strokeWidth="1.200" /><circle cx="8" cy="7" r="1.200" fill="#222" /><path d="M8 22l14-11" stroke="#111" /><circle cx="8" cy="22" r="2" fill="#d01818" /><circle cx="20" cy="12" r="2" fill="#d01818" /></g>,

    tabsTree: <g><rect x="1" y="1" width="10" height="12" fill="#dfe4f8" stroke="#4a58b8" /><rect x="6" y="5" width="10" height="12" fill="#dfe4f8" stroke="#4a58b8" /><path d="M3 4h6M3 7h2M8 8h6M8 11h6" stroke="#4a58b8" /><TreeB x="14" y="9" /></g>,
    drillTree: <g><path d="M3 8l5-7 3 0v16l-8 6z" fill="#2a5ab0" /><rect x="7" y="4" width="4" height="5" fill="#f0c040" /><path d="M12 2h4v14" stroke="none" fill="#333" opacity=".7" /><TreeB x="13" y="8" /></g>,
    cubeTree: <g><Cube x="3" y="0" s=".8" t="#a8c0f0" l="#7a9ae8" r="#3a60c8" /><circle cx="6" cy="10" r="3.500" fill="#ffb428" stroke="#d01818" /><TreeB x="13" y="9" /></g>,
    waterTree: <g><path d="M1 3h14M1 6c2-2 3 1 5 0s3 1 4 0" stroke="#1a5a8a" fill="none" /><rect x="1" y="7" width="15" height="7" fill="#e8f0fa" stroke="#1a5a8a" /><path d="M1 10c2-2 3 1 5 0s3 1 4 0 3 1 4 0" stroke="#1a5a8a" fill="none" /><TreeB x="14" y="9" /></g>,
    abs: <g><path d="M5 18V4M5 4L3 7M5 4l2 3" stroke="#d01010" strokeWidth="1.400" fill="none" /><path d="M5 18h14M19 18l-3-2M19 18l-3 2" stroke="#d01010" strokeWidth="1.400" fill="none" /><path d="M5 18L1 10" stroke="#f08020" /><path d="M5 18l6 5" stroke="#12a040" strokeWidth="1.500" /><Lbl x="9" y="24" z="7" c="#111" b>ABS</Lbl></g>,
    xDim: <g><path d="M3 2l13 14M16 2L3 16" stroke="#333" strokeWidth="2" /><path d="M20 2h4M22 2v15M20 17h4M1 20v4M1 22h16M17 20v4" stroke="#333" /><Lbl x="21" y="9" z="5" c="#a02020">x</Lbl><Lbl x="8" y="25" z="5" c="#a02020">x</Lbl></g>,
    listG: <g><path d="M5 3l10-2 7 3v16l-10 3-7-2z" fill="#eee8ee" stroke="#806080" /><path d="M7 8h13M7 12h13M7 16h13" stroke="#604060" /><path d="M5 3v18M2 7l3-3M2 11l3-3M2 15l3-3" stroke="#a06090" /></g>,
    arrL: <path d="M1 12l10-9v5h11v8H11v5z" fill="#b89ae8" stroke="#8a6ac0" />,
    arrR: <path d="M23 12L13 3v5H2v8h11v5z" fill="#8a9ae8" stroke="#6a7ac0" />,
    diamZ: <g><path d="M13 4l7 7-8 9-7-7z" fill="#5e8ad8" stroke="#102a78" /><path d="M13 4l3 7-4 9-7-7z" fill="#fff" opacity=".7" /><path d="M17 2h5v5M6 23H1v-5" stroke="#3a78d8" strokeWidth="1.300" fill="none" strokeDasharray="2 1" /></g>,
    sqArr: <g><rect x="12" y="1" width="10" height="10" fill="#fff" stroke="#666" /><rect x="1" y="14" width="10" height="10" fill="#fff" stroke="#666" /><path d="M3 11l6-6" stroke="#e88020" strokeWidth="2" /><path d="M9 3v4H5z" fill="#e88020" /></g>,
    blueT: <g><rect x="8" y="7" width="8" height="9" fill="#4060c8" stroke="#1010b0" /><rect x="3" y="16" width="18" height="8" fill="#4060c8" stroke="#1010b0" /><path d="M11 7V1M11 1L8 4M11 1l3 3M11 3h7M18 3l-3-2" stroke="#d01010" fill="none" /></g>,
    cubeR: <g><path d="M1 8l10-6 10 4v11l-10 3-10-3z" fill="#a878e0" stroke="#5a3090" /><path d="M1 8l10 4 10-6M11 12v8" stroke="#5a3090" fill="none" /><rect x="2" y="19" width="21" height="5" fill="#f0e080" stroke="#666" /><path d="M19 3l2 4-2 6" stroke="#20a040" strokeDasharray="2 1" fill="none" /></g>,
    cubeW: <g><path d="M1 6h17l5-5v18l-5 5H1z" fill="#fff" stroke="#111" /><path d="M1 6l5-5h17M18 6v18" stroke="#111" fill="none" /><path d="M6 8l6-3 6 3v12l-6 3-6-3z" fill="#a040d8" stroke="#501888" /></g>,
    rMark: <g><Lbl x="12" y="11" z="12" c="#1a1ac8" b>R</Lbl><path d="M4 17c4 6 12 6 17-3" stroke="#d01818" strokeWidth="1.500" fill="none" /><path d="M8 3l3 11" stroke="#6060a0" fill="none" /></g>,
    hatchBox: <g><path d="M2 12l10-6 10 6-10 6z" fill="#fff" stroke="#333" /><path d="M6 3l12 3 4 6M2 12v6l10 6 10-6v-6" stroke="#d06060" fill="none" strokeDasharray="2 1" /><path d="M7 12l5-3 5 3-5 3z" fill="none" stroke="#333" /></g>,
    bowl: <g><path d="M5 3h14M12 3v9" stroke="#333" strokeWidth="1.500" /><path d="M1 16c4-5 9-4 11-2s7 0 11-3v8c-4 3-8 5-11 3s-8-1-11 1z" fill="#7aa8e8" stroke="#3a68b8" /><path d="M7 16c3-2 6 2 10-1" stroke="#e03020" strokeWidth="1.500" fill="none" /><path d="M9 8h6l-3 4z" fill="#e87020" /></g>,
    stripes: <g><path d="M1 15L15 2l8 10-13 12z" fill="#111" /><path d="M1 14L14 2l3 3L4 17z" fill="#f8d800" /><path d="M4 17L17 5l2 3L6 20z" fill="#e82020" /><path d="M6 19L19 7l2 2L8 21z" fill="#f08020" /></g>,
    infoTag: <g><rect x="5" y="1" width="10" height="10" fill="#fff" stroke="#1a2a90" /><Lbl x="10" y="10" z="10" c="#111" b a="middle">i</Lbl><path d="M2 12l11-1 3 4v8l-11 1z" fill="#b8c8f0" stroke="#5a68b0" /><path d="M15 11l8-5-7 12" stroke="#d06060" fill="none" /><circle cx="10" cy="18" r="2" fill="#d84060" /></g>,
    cyls: <g><rect x="1" y="10" width="11" height="13" rx="3" fill="#b0ccf4" stroke="#6a8ac0" /><rect x="11" y="5" width="12" height="18" rx="3" fill="#c8dcf8" stroke="#6a8ac0" /><path d="M5 10V5l4-3" stroke="#e88020" strokeWidth="2" fill="none" /></g>,
    redCube: <g><path d="M2 5h17l4 3v13l-4 3H2z" fill="#fff" stroke="#666" /><path d="M6 9l6-4 7 3v11l-7 4-6-4z" fill="#e01818" /><path d="M12 12v11l7-4V8z" fill="#701010" /><path d="M6 9l6 3 7-4-7-3z" fill="#f05050" /></g>,
    pinkPlane: <g><path d="M9 0v24L1 16V8z" fill="#f090b8" stroke="#d06090" /><path d="M9 9l7-3 8 4v8l-7 4-8-4z" fill="#fff" stroke="#9aa" /><path d="M9 13l8 4 7-5" stroke="#9aa" fill="none" /></g>,
    blocksA: <g><path d="M1 11l8-4 14 4v9l-10 4-12-4z" fill="#90c4f0" stroke="#3a78b8" /><path d="M1 11l12 4 10-4M13 15v9" stroke="#3a78b8" fill="none" /><path d="M10 4v17M14 4v17" stroke="#d03020" /><path d="M2 4h8M14 4h8" stroke="#e88020" strokeWidth="2" /></g>,
    blocksB: <g><path d="M1 11l9-4 13 4v8l-10 4-12-4z" fill="#90c4f0" stroke="#3a78b8" /><path d="M1 11l12 4 10-4M13 15v8" stroke="#3a78b8" fill="none" /><path d="M12 0v24M8 4h8M8 20h8" stroke="#b03020" /></g>,
    rect: <g><rect x="4" y="4" width="17" height="17" fill="none" stroke="#1a2a70" strokeWidth="1.200" /><circle cx="4" cy="4" r="1.300" fill="#333" /><circle cx="21" cy="21" r="1.300" fill="#333" /></g>,
    hexB: <path d="M6 3h12l5 10-5 10H6L1 13z" fill="#d4d8ec" stroke="#3a48c8" strokeWidth="1.200" />,
    wcs: <g><path d="M5 20V3M5 3L3 7M5 3l2 4" stroke="#1010b0" strokeWidth="1.400" fill="none" /><path d="M5 20l13-7" stroke="#20a040" strokeWidth="1.400" /><path d="M5 20l13 4" stroke="#d01818" strokeWidth="1.400" /><Lbl x="9" y="8" z="8" b>Z</Lbl><Lbl x="18" y="13" z="8" b>Y</Lbl><Lbl x="18" y="26" z="8" b>X</Lbl></g>,
    target: <g><rect x="4" y="4" width="16" height="16" fill="#f0a8b0" stroke="#a05060" /><path d="M12 0v24M0 12h24" stroke="#e01010" strokeWidth="1.300" strokeDasharray="6 2 4 2" /></g>,
    oBox: <g><rect x="2" y="2" width="20" height="20" fill="#fff" stroke="#e87020" strokeWidth="1.500" /><ellipse cx="12" cy="12" rx="5" ry="7" fill="none" stroke="#8010e0" strokeWidth="2" /></g>,
    textI: <g><Lbl x="-1" y="21" z="12" c="#7020a0" b>Text</Lbl><path d="M14 1l4 1-4 8z" fill="#f4c83c" stroke="#333" strokeWidth=".5" /></g>,
    dashBox: <g><path d="M2 4l5-2 14 7-5 3z" fill="#fff" stroke="#d06060" /><path d="M2 4l0 13 14 6V12M21 9v12l-5 2" stroke="#777" strokeDasharray="2 1" fill="none" /></g>,
    lamp: <g><path d="M6 9l3-8 6 1 2 8z" fill="#5a7a40" stroke="#223" /><path d="M6 9l11 1-5 10-8 2z" fill="#fff" stroke="#bbb" /><path d="M6 9l11 1-2 4-10-1z" fill="#ffe860" /></g>,
    ring: <ellipse cx="12" cy="12" rx="9" ry="10" fill="none" stroke="#444" strokeWidth="2" />,
    links: <g><ellipse cx="9" cy="8" rx="4.500" ry="7.500" fill="none" stroke="#c8b420" strokeWidth="2.200" transform="rotate(-15 9 8)" /><ellipse cx="14" cy="17" rx="4.500" ry="7.500" fill="none" stroke="#c8b420" strokeWidth="2.200" transform="rotate(-15 14 17)" /></g>,
    layerT: <g><path d="M2 7l10-6 10 6-10 6z" fill="#8ad8a0" stroke="#3a9a58" /><path d="M2 19l10-6 10 6-10 5z" fill="#8ad8a0" stroke="#3a9a58" /><rect x="8" y="6" width="10" height="11" fill="#b0b4f4" stroke="#3a48c8" /><path d="M10 10h6M10 13h6" stroke="#3a48c8" /></g>,
    cards: <g><rect x="1" y="1" width="12" height="14" fill="#fff" stroke="#111" /><rect x="6" y="6" width="14" height="16" rx="2" fill="#e8f4f0" stroke="#111" /><path d="M9 10h8M9 14h8M9 18h8M13 10v9" stroke="#107a70" /><path d="M16 6l3-5M19 7l4-5" stroke="#c8a020" strokeWidth="1.500" /></g>,
    tubeP: <g><rect x="3" y="7" width="7" height="15" fill="#1a8ac8" /><rect x="12" y="2" width="9" height="20" fill="#1a5ab0" /><rect x="8" y="11" width="6" height="7" fill="#f08020" /><circle cx="11" cy="14" r="1.500" fill="#d01818" /><path d="M4 7V4h4" stroke="#f0c020" fill="none" strokeWidth="1.500" /></g>,
    treeD: <g><Drill x="2" y="1" w="3" h="10" /><path d="M5 3h7M5 6h5" stroke="#c08090" /><Drill x="12" y="10" w="3" h="11" /><path d="M15 13h7M15 16h5" stroke="#556" /></g>,
    copyT: <g><Drill x="2" y="0" w="3" h="10" /><path d="M5 3h7M5 6h5" stroke="#889" /><Doc x="7" y="7" s=".8" c="#aab" f="#f0f4ff" /><Doc x="11" y="10" s=".8" c="#aab" f="#f0f4ff" /></g>,
    millArrow: <g><Drill x="3" y="1" w="5" h="18" /><Star x="5" y="21" r="3" /><path d="M8 14h8v-4l7 6-7 6v-4H8z" fill="#2a60e0" /></g>,
    stripeDown: <g><rect x="1" y="1" width="13" height="16" fill="#111" /><path d="M3 15L9 2M7 15l5-11" stroke="#fff" strokeWidth="1.800" /><rect x="1" y="17" width="13" height="7" fill="#fff" stroke="#e01010" strokeDasharray="2 1" /><path d="M19 2v20M19 23l-3-4h6z" fill="#e01010" stroke="#e01010" /></g>,
    machA: <g><path d="M10 4h10v19H6v-5h6v-4H8z" fill="#e8e0a0" stroke="#807830" /><path d="M3 3v5h5M8 8L5 5M8 8l-3 3" stroke="#d01010" strokeWidth="1.500" fill="none" /></g>,
    machB: <g><Drill x="2" y="0" w="3" h="11" /><path d="M7 3h12v6M5 6h6" stroke="#444" fill="none" /><path d="M9 13h10l3 5-6 6-9-4z" fill="#e0e0e0" stroke="#333" /><path d="M2 16c0 3 1 4 4 4" stroke="#e87020" strokeWidth="1.600" fill="none" /></g>,
    machGrid: <g><rect x="0" y="0" width="24" height="24" fill="#adadad" /><rect x="4" y="2" width="17" height="21" fill="#ffe890" stroke="#808030" /><path d="M4 12h17M4 16h17M4 20h17M9 10v13M14 10v13M18 10v13" stroke="#2a60e0" /><path d="M2 3v4h5M7 7L5 5" stroke="#d01010" strokeWidth="1.300" fill="none" /></g>,
    globeWr: <g><circle cx="12" cy="12" r="11" fill="#d8dcdc" stroke="#999" /><circle cx="10" cy="9" r="6" fill="#fff" opacity=".7" /><Wrench x="3" y="3" /></g>,
    textA: <g><rect x="2" y="6" width="18" height="18" fill="#f4f4fc" stroke="#7a70a0" /><Lbl x="11" y="21" z="15" c="#111" b a="middle">A</Lbl><path d="M16 9l6-8 2 2-6 8-3 1z" fill="#f08020" stroke="#803" strokeWidth=".5" /></g>,
    pen: <g><path d="M7 15L19 3l4 4-12 12z" fill="#d8b040" stroke="#806010" /><path d="M2 21l5-6 4 4-6 5z" fill="#108a70" stroke="#064" /><path d="M12 10l4 4M15 7l4 4" stroke="#806010" /></g>,
    docBend: <g><rect x="0" y="9" width="24" height="14" fill="#f0f4fc" stroke="#8a90c0" /><path d="M15 0c3 3 3 8 0 11-2 1-3 0-3-1" stroke="#5a7a8a" strokeWidth="2.500" fill="none" /><rect x="15" y="18" width="6" height="4" fill="#fff" stroke="#777" /></g>,
    pages: <g><rect x="1" y="4" width="13" height="19" rx="1" fill="#fff" stroke="#111" strokeWidth="1.200" /><path d="M6 1h10l5 5v16H6z" fill="#fff" stroke="#111" strokeWidth="1.200" /></g>,
    slope: <g><path d="M1 24L23 10v14z" fill="#10808a" /><path d="M1 24L10 17 23 8v16z" fill="#107a78" /><rect x="5" y="0" width="3" height="9" fill="#1a30d0" /><circle cx="6.500" cy="11" r="3.500" fill="#ffe000" stroke="#a08000" /></g>,
    starList: <g><rect x="2" y="5" width="21" height="18" fill="#f0f0fc" stroke="#7a70b0" /><rect x="7" y="6" width="2" height="12" fill="#1a30d0" /><circle cx="8" cy="18" r="2.500" fill="#e01818" /><path d="M13 15h8M13 18h8M13 21h8" stroke="#7a70b0" /><Star x="7" y="5" r="4.500" /></g>,
    cycle: <g><path d="M2 12V8h14V3l7 6-7 5v-3H6v3z" fill="#e87820" stroke="#a04a10" strokeWidth=".6" /><path d="M22 13v4H9v4l-7-6 7-5v4h9v-2z" fill="#18b030" stroke="#0a7020" strokeWidth=".6" /></g>,
    bitsWr: <g><path d="M3 3h5v10l-2 5-3-5z" fill="#ddd" stroke="#222" /><path d="M3 6l5-1M3 9l5-1" stroke="#222" /><rect x="13" y="2" width="7" height="11" rx="2" fill="#c4e4e4" stroke="#222" /><Wrench x="8" y="11" s=".75" /></g>,
    panelG: <g><rect x="1" y="3" width="23" height="19" rx="1" fill="#0a3a50" stroke="#111" /><rect x="4" y="6" width="17" height="5" fill="#28a0c8" /><path d="M4 14h2M8 14h2M12 14h2M16 14h2M4 17h2M8 17h2M12 17h2M16 17h2M20 14v3" stroke="#7fe" strokeWidth="1.600" /></g>,
    clockL: <g><circle cx="12" cy="12" r="10.500" fill="#9cc8ec" stroke="#6a9ac8" strokeWidth="1.500" /><circle cx="12" cy="12" r="7.500" fill="#e8f4fc" /><path d="M12 6v6h5" stroke="#d01818" strokeWidth="1.300" fill="none" /></g>,
    clockG: <g><circle cx="12" cy="12" r="10" fill="#dfe6ec" stroke="#667" strokeWidth="1.800" /><circle cx="12" cy="12" r="7.500" fill="#9ab8d8" /><path d="M12 5v7h6" stroke="#111" strokeWidth="1.800" fill="none" /></g>,

    vMove: <g><PCube y="1" /><Move4 /></g>,
    vUp: <g><PCube y="0" /><path d="M14 8l4 5h-2v5h5l-7 5-8-5h6v-5h-2z" fill="#fff" stroke="#111" /></g>,
    vHand: <g><PCube y="0" /><path d="M11 23V13h3V7h3v6h6v10z" fill="#fff" stroke="#111" strokeWidth="1.200" /></g>,
    vCyl: <g><rect x="2" y="2" width="14" height="19" fill="#ffc03a" stroke="#e8400a" /><ellipse cx="9" cy="3" rx="7" ry="2.500" fill="#a050d0" /><path d="M15 13l7 9H8z" fill="#e8802a" stroke="#111" strokeWidth="1.200" /></g>,
    vLoop: <g><PCube y="0" /><path d="M11 13l11-2-2 5 2 2-2 5H11l3-4-3-3z" fill="#ddd" stroke="#111" /></g>,
    vFill: <g><path d="M1 6c4-5 10-6 17-4v14H3z" fill="#c070e0" /><path d="M2 8c4-3 9-4 14-2v10H2z" fill="#ffc03a" stroke="#e8400a" /><path d="M11 11l9 11H2z" fill="#d8d8d8" stroke="#111" strokeWidth="1.300" /></g>,
    vX: <g><PCube y="0" /><path d="M9 11l13 12M22 10L9 23" stroke="#333" strokeWidth="2.500" /></g>,
    vCopy: <g><PCube y="0" /><Doc x="10" y="5" s=".75" c="#3040c0" f="#e8f0ff" /><Doc x="14" y="10" s=".75" c="#3040c0" f="#e8f0ff" /></g>,
    vSplit: <g><PCube y="0" /><rect x="12" y="3" width="9" height="9" fill="#fff" stroke="#111" /><rect x="12" y="14" width="9" height="9" fill="#fff" stroke="#111" /></g>,
    vDim: <g><PCube y="0" /><path d="M5 20h18M5 17v6M23 17v6" stroke="#111" strokeWidth="1.300" /><path d="M11 11l5 5M16 11l-5 5" stroke="#111" /><circle cx="3" cy="17" r="1.200" fill="#e01010" /></g>,
    vGray: <path d="M1 6l8-4 9 2 3 3c1 6-1 11-6 14-6 0-12-4-13-8z" fill="#9a8a9c" stroke="#887a8c" />,
    vSel: <g><PCube y="0" /><path d="M12 11h8v8h-8zM8 7h7v7H8z" fill="#fff" stroke="#111" strokeWidth="1.100" /><g fill="#1a30d0"><rect x="7" y="6" width="2" height="2" /><rect x="20" y="18" width="2" height="2" /></g></g>,
    vTri: <g><path d="M5 6l9-5 8 4v11l-9 5-8-4z" fill="#f0d8f8" stroke="#b070d8" /><path d="M13 10v11M5 6l8 4 9-5" stroke="#b070d8" fill="none" /><path d="M11 9v8" stroke="#e8701a" strokeDasharray="2 1" /><path d="M8 14l7 9H1z" fill="#fff" stroke="#111" strokeWidth="1.200" /></g>,
    vWand: <g><PCube y="0" /><path d="M12 11l11 13" stroke="#111" strokeWidth="2.500" /><Star x="12" y="10" r="4.500" /></g>,
    vMoveP: <g><path d="M0 6l10-5 9 4v11l-9 5-10-4z" fill="#d8b0f0" stroke="#9050c0" /><path d="M0 6l10 4 9-5M10 10v11" stroke="#9050c0" fill="none" /><Move4 /></g>,
    vRefresh: <g><path d="M3 10c3-6 11-7 16-3l2-2 1 7-8-1 3-2c-3-2-7-2-10 1z" fill="#9020c8" /><path d="M21 14c-3 6-11 7-16 3l-2 2-1-7 8 1-3 2c3 2 7 2 10-1z" fill="#8018b8" /></g>,
};

// ── toolbar rows, each item is kind:centre-x, "*" marks a pressed button ──
const ROW1 = ': 3,logo 20,label 38,v 68,new 88,open 119,recent 147,v 169,save 190,saveas 220,print 252,| 270,cutG 289,copyG 320,pasteG 351,xdark 383,| 401,undo 420,v 441,| 450,save 475,v 490,| 499,infoD 515,search 541,w 693,| 702,: 707,fit 724,v 747,shadeG 769,v 790,cubeB 811,v 833,orangeG 854,clipG 885,v 907,rectBox 928,v 950,| 959,docArr 981,docArr2 1007,w 1030,| 1038,: 1043,sFlash 1060,sArr 1091,cutA* 1124,cutB* 1154,circR 1185,curveR 1215,palette 1246,treePal 1276,millPal 1308,stairs* 1341,w 1361,| 1370,: 1375,layersList 1393,polyNet 1422,v 1446,| 1455,handD 1473,palKey 1504,| 1523,playD 1541,v 1564,| 1572,antenna 1589,v 1612,rulerDim 1632,w 1654,| 1663,: 1667,tube 1684,handBox 1718,lightList 1747,redList 1779,fitBox 1811,chev 1850,| 1859,: 1864,check 1882';
const ROW2 = ': 3,sheet 20,millKey 53,cubeBomb 84,water 115,millFan 147,w 167,| 176,: 182,millWr 200,millSc 231,millCopyG 261,millPaste 292,pasteArr 323,millX 354,millInfo 385,toolG 416,w 437,| 445,: 450,fanG 469,sArr 500,checkBox 531,sDoc 562,checkMach 593,booksG 624,machG 660,docTool 691,millClock 724,w 745,| 752,: 758,targetG 777,toolA 807,w 829,toolB 850,w 872,toolC 893,w 915,w 926,| 935,: 940,tree* 958,treeBolts 989,| 1008,binoc 1026,tagPlus 1058,tagO 1087,tagCyl 1118,tagBox 1148,| 1168,cubeFan 1187,| 1206,xdark 1224,w 1245,| 1253,: 1258,bracket 1277,| 1296,d1 1314,d2 1345,d3 1377,d4 1408,d5 1438,d6 1469,d7 1500,d8 1531,d9 1562,d10 1593,d11 1624,| 1642,rA 1661,rB 1692,| 1711,dia 1730,noDia 1760,backG 1789,w 1812,| 1821,: 1826,check 1844,checkTree 1874';
const ROW3 = ': 3,dxf 22,inch 53,layers 85,open 115,saveWin 147,yellowSq 177,calc 208,moon 240,frac 269,w 291,| 300,: 306,pnc 322,handForm 354,tBox 386,listArr 415,greenBox 446,sShape2 478,arrowWave 508,bear 540,folderTree 571,millWr 602,mTree 633,barTree 662,axesArr 695,listTree 726,millStar 758,curveY 787,w 809,| 818,: 823,layL 842,layW 873,layS 903,layD 935,layDoc 965,| 985,polyNet 999,w 1025,| 1034,mfg 1050,upY 1080,downY 1111,sp1 1143,sp2 1171,sp3 1201,sp4 1233,sp5 1267,sp6 1298,w 1320,| 1328';
const ROW4 = 'combo1 5,combo2 160,bolts 331,| 345,filtG 359,filtF 379,v 396,rotG 414,toolG2 437,| 451,hexO 464,dashSq 488,v 506,| 515,boxG 529,cubeC 552,pointLine 575';
const ROW5 = ': 5,tabsTree* 22,drillTree 51,cubeTree 81,waterTree 114,w 136,| 144,: 149,abs 169,xDim 199,listG 231,arrL 261,arrR 291,diamZ 322,sqArr 355,blueT 386,cubeR 415,cubeW 447,rMark 480,hatchBox 510,bowl 541,stripes 571,infoTag 600,cyls 632,redCube 664,pinkPlane 695,blocksA 728,blocksB 756,rect 788,v 810,hexB 831,v 853,wcs 873,target 905,oBox 936,textI 967,dashBox 999,lamp 1028,ring 1060,w 1081,| 1090,: 1095,links 1113,chev 1145,| 1153,: 1158,layerT 1177,cards 1207,tubeP 1239,millFan 1269,treeD 1300,copyT 1331,millArrow 1361,stripeDown 1395,millWr 1425,machA 1456,machB 1486,machGrid 1517,globeWr 1548,textA 1578,pen 1611,docBend 1640,pages 1672,slope 1703,starList 1735,print 1765,cycle 1796,bitsWr 1826,panelG 1857,clockL 1889';

const MENU_A = [['文件', 'F'], ['编辑', 'E'], ['视图', 'V'], ['插入', 'S'], ['格式', 'R'], ['工具', 'T'], ['装配', 'A'], ['优品软件'], ['产品制造信息', 'M'], ['信息', 'I'], ['分析', 'L']];
const MENU_B = [['首选项', 'P'], ['应用模块', 'N'], ['浩强工具v2.60'], ['窗口', 'O'], ['GC工具箱'], ['星空 V6.936F'], ['帮助', 'H']];

function Icon({ k, size = 26 }) {
    return <svg width={size} height={size} viewBox="0 0 24 24" className="shrink-0 overflow-visible">{I[k]}</svg>;
}
const Grip = () => <div className="h-[24px] w-[2px] border-l-2 border-dotted border-[#8f8f8f]" />;
const Sep = () => <div className="self-stretch w-[2px] border-l border-[#a9a9a9] bg-[#f0f0f0]" />;
const Caret = ({ low }) => <div className={`h-0 w-0 border-x-[3.500px] border-t-[4px] border-x-transparent border-t-black ${low ? 'mt-[13px]' : ''}`} />;

const Combo = ({ w, label }) => (
    <div className={`flex h-[21px] items-stretch rounded-[2px] border border-[#8b8b8b] bg-white ${w}`}>
        <span className="flex-1 pl-[2px] text-[12px] leading-[20px] text-black">{label}</span>
        <div className="flex w-[16px] items-center justify-center bg-gradient-to-b from-[#a9c6ee] to-[#5f8ccb]">
            <div className="h-0 w-0 border-x-[5px] border-t-[6px] border-x-transparent border-t-[#10244e]" />
        </div>
    </div>
);

// one item and how wide it is, so the row can be laid out from the x values above
function measure(k) {
    if (k === ':' || k === '|') return 2;
    if (k === 'v' || k === 'w') return 7;
    if (k === 'label') return 26;
    if (k === 'search') return 144;
    if (k === 'combo1') return 145;
    if (k === 'combo2') return 153;
    if (k === 'chev') return 12;
    if (k.endsWith('*')) return 30;
    return 26;
}
function Item({ k, size }) {
    if (k === ':') return <Grip />;
    if (k === '|') return <Sep />;
    if (k === 'v') return <Caret />;
    if (k === 'w') return <Caret low />;
    if (k === 'label') return <span className="w-[26px] text-[12px] text-black">启动</span>;
    if (k === 'search') {
        return (
            <div className="flex h-[24px] w-[144px] items-center justify-between border border-[#c4c4c4] bg-white px-[3px]">
                <span className="text-[12px] text-[#a0a0a0]">查找命令</span>
                <svg width="17" height="17" viewBox="0 0 24 24"><circle cx="14" cy="9" r="7" fill="#f4f4f4" stroke="#555" strokeWidth="1.800" /><path d="M9 14l-7 7" stroke="#555" strokeWidth="3" /></svg>
            </div>
        );
    }
    if (k === 'combo1') return <Combo w="w-[145px]" label="没有选择过滤器" />;
    if (k === 'combo2') return <Combo w="w-[153px]" label="整个装配" />;
    if (k === 'chev') {
        return (
            <div className="flex h-[30px] w-[12px] flex-col items-center justify-between py-[3px]">
                <span className="text-[12px] font-bold leading-[10px] text-black">»</span>
                <Caret />
            </div>
        );
    }
    if (k.endsWith('*')) {
        return (
            <div className="flex h-[29px] w-[30px] items-center justify-center rounded-[3px] border border-[#555] bg-white">
                <Icon k={k.slice(0, -1)} size={24} />
            </div>
        );
    }
    return <div className="flex w-[26px] justify-center"><Icon k={k} size={size} /></div>;
}

function Toolbar({ spec, size = 26, className }) {
    let right = 0;
    const items = spec.split(',').map((s, i) => {
        const [k, x] = s.split(' ');
        const w = measure(k);
        // label, search and combos are given by their left edge, the rest by their centre
        const left = ['label', 'search', 'combo1', 'combo2'].includes(k) ? +x : +x - w / 2;
        const gap = left - right;
        right = left + w;
        return <div key={i} className="flex shrink-0 items-center self-stretch" style={{ marginLeft: gap }}><Item k={k} size={size} /></div>;
    });
    return <div className={`flex items-center overflow-hidden ${className}`}>{items}</div>;
}

const LEFT_TABS = [
    { k: 'cubes', m: 'mt-0' }, { k: 'geom', m: 'mt-[2px]' }, { k: 'cyl', m: 'mt-px' }, { k: 'prog', m: '-mt-[2px]', on: true },
    { k: 'sheetO', m: 'mt-0' }, { k: 'mach', m: 'mt-[3px]' }, { k: 'books', m: 'mt-[2px]' },
    { k: 'info', m: 'mt-[13px]' }, { k: 'globeDoc', m: 'mt-[15px]' }, { k: 'clock', m: 'mt-[13px]' },
    { k: 'rainbow', m: 'mt-[3px]' }, { k: 'millW', m: 'mt-[2px]' }, { k: 'hammer', m: 'mt-[2px]' }, { k: 'door', m: 'mt-px' }, { k: 'starWin', m: 'mt-[2px]' },
];
const TabIcon = {
    cubes: <g><Cube x="1" y="0" s=".5" t="#ffe080" l="#f0c040" r="#e0a020" /><Cube x="5" y="-2" s=".5" t="#ffe080" l="#f0c040" r="#e0a020" /><Cube x="5" y="6" s=".5" t="#ffe080" l="#f0c040" r="#e0a020" /><path d="M5 14v9M5 18h6M15 9h9" stroke="#1010b0" fill="none" /><Cube x="14" y="12" s=".5" t="#ffe080" l="#f0c040" r="#e0a020" /></g>,
    geom: <g><path d="M2 1l8 6 8-6v12l-8-6-8 6z" fill="#1010c0" /><path d="M12 0v23" stroke="#555" strokeDasharray="2 1" /><rect x="1" y="14" width="9" height="9" fill="#ffe000" stroke="#222" /><path d="M14 23V12l9 11z" fill="#c01818" stroke="#222" /></g>,
    cyl: <g><rect x="1" y="1" width="10" height="10" rx="2" fill="#f0b0d8" stroke="#a02070" /><path d="M13 7h9M4 12v11M4 17h6" stroke="#1010b0" fill="none" /><circle cx="16" cy="18" r="5.500" fill="none" stroke="#802060" /><circle cx="16" cy="18" r="2" fill="#d070b0" /></g>,
    prog: <g><Drill x="2" y="1" w="4" h="10" /><path d="M6 3h8M6 6h6M14 9h9" stroke="#4060c0" fill="none" /><path d="M4 12v11M4 17h6" stroke="#1010b0" fill="none" /><path d="M12 14h4v4h4v3h-8z" fill="#fff" stroke="#1010b0" /></g>,
    sheetO: <g><path d="M0 9L22 2v8L2 16z" fill="#f0a0a0" stroke="#c08040" /><path d="M2 13h14M6 5v10M12 4v10" stroke="#d08040" /><path d="M4 15l10-3 10 4-1 4-11 3-8-3z" fill="#f08020" /><path d="M12 19l12-5v4l-11 5z" fill="#2a78d8" /></g>,
    mach: <g><rect x="2" y="10" width="12" height="10" fill="#ddd" stroke="#333" /><rect x="4" y="12" width="8" height="6" fill="#fff" stroke="#333" /><path d="M8 4l5-2 1 4-4 2zM15 2l6-1 1 4-5 2z" fill="#f06020" stroke="#a02010" /><path d="M17 12h5l-3 4h3l-4 5" stroke="#333" fill="none" /></g>,
    books: <g><rect x="1" y="4" width="7" height="19" fill="#f08020" stroke="#a05010" /><rect x="8" y="2" width="7" height="21" fill="#30b030" stroke="#107010" /><path d="M15 5l7-3 2 18-9 3z" fill="#1a7ad0" stroke="#0a4a90" /></g>,
    info: <g><path d="M11 3c7 0 13 6 13 13M11 7c5 0 9 4 9 9" stroke="#2a78d8" strokeWidth="2.500" fill="none" /><circle cx="9" cy="15" r="8" fill="#1a78e0" stroke="#0a4a90" /><Lbl x="9" y="20" z="13" c="#fff" b a="middle">i</Lbl></g>,
    globeDoc: <g><path d="M3 1h13l6 6v16H3z" fill="#fff" stroke="#4a70b0" strokeWidth="1.200" /><circle cx="12" cy="14" r="6" fill="#2a80d8" /><path d="M8 12l4-2 1 4-3 3zM14 11l3 2-1 4z" fill="#40b040" /></g>,
    clock: <g><ellipse cx="12" cy="12" rx="11" ry="10" fill="#dfe6ec" stroke="#555" strokeWidth="1.500" /><path d="M12 5v7h7" stroke="#111" strokeWidth="1.600" fill="none" /></g>,
    rainbow: <g><defs><linearGradient id="rb" x1="0" y1="0" x2="1" y2="1"><stop offset="0" stopColor="#e01818" /><stop offset=".33" stopColor="#f0e020" /><stop offset=".66" stopColor="#20c040" /><stop offset="1" stopColor="#2040e0" /></linearGradient></defs><rect x="1" y="1" width="12" height="22" fill="url(#rb)" /><path d="M12 9l11 13" stroke="#111" strokeWidth="2.500" /></g>,
    millW: <g><Drill x="5" y="1" w="5" h="18" /><Fan x="10" y="2" c="#4060c0" /><Star x="7" y="20" r="4" /><path d="M11 9l11 13" stroke="#111" strokeWidth="2.500" /></g>,
    hammer: <g><path d="M5 12l9-6 7 2-5 3-6 5z" fill="#888" stroke="#333" /><path d="M1 18c3-2 6-2 8 0l4-3 4 3 5-1-4 4H3z" fill="#999" stroke="#555" /><path d="M4 20l5-4" stroke="#f08020" strokeWidth="3" /></g>,
    door: <g><path d="M1 4l6-3v21l-6-2z" fill="#eee" stroke="#555" /><rect x="7" y="3" width="16" height="18" fill="#fff" stroke="#888" /><path d="M10 16l3-8 3 3 3-3 2 8z" fill="#e02020" /><rect x="10" y="6" width="11" height="3" fill="#f0a020" /></g>,
    starWin: <g><rect x="4" y="8" width="20" height="15" fill="#e8f0fc" stroke="#4a58b8" /><path d="M15 17h9M15 20h9M15 17v6" stroke="#4a58b8" /><Star x="6" y="6" r="5.500" /></g>,
};

// vertical toolbar: icon, then 1 = has a caret, 2 = pressed split button
const VT = [
    ['vMove', 1], ['vMove'], ['vUp'], ['vHand'], ['vCyl'], ['vLoop'], ['vFill', 1], ['vX'], ['vCopy', 1], ['vSplit', 1], ['vDim', 2], ['vGray', 1],
    ['vSel'], ['vTri'], ['vWand', 1], ['vMoveP', 1],
];

const BulbIcon = () => <svg width="9" height="17" viewBox="0 0 9 17"><path d="M1 1.500a3.500 2 0 0 1 7 0L5.500 11h-2z" fill="#ffe500" stroke="#b09a00" strokeWidth=".6" /><circle cx="4.500" cy="14.500" r="1.800" fill="#ffe500" stroke="#b09a00" strokeWidth=".6" /></svg>;
const FolderIcon = () => (
    <svg width="14" height="13" viewBox="0 0 14 13"><path d="M.5 2.500h4l1-1.500h3l1 1.500h4v10H.5z" fill="#ffe9a8" stroke="#9a8440" /><rect x="5.500" y="4.500" width="6.500" height="6.500" fill="#fff" stroke="#1010c0" /><path d="M7 6h3.500v2H7v1.500h3.500" fill="none" stroke="#1010c0" /></svg>
);
const OpIcon = () => (
    <svg width="14" height="16" viewBox="0 0 14 16"><path d="M1 9c0-3 2-3 3-5h6l3 5c1 3-1 4-2 4l-1 2H4l-1-2c-2 0-2-2-2-4z" fill="#fff" stroke="#222" /><rect x="6" y="0" width="4" height="8" fill="#3a3fb0" /></svg>
);
const CheckIcon = () => <svg width="13" height="13" viewBox="0 0 13 13"><path d="M0 7l3-2 2 3 6-7 2 1-7 11H4z" fill="#12b83c" stroke="#0a8028" strokeWidth=".5" /></svg>;

const ROWS = [
    { pl: 5, name: 'NC_PROGRAM' },
    { pl: 21, folder: true, name: '未用项' },
    { pl: 24, bulb: true, folder: true, name: 'A' },
    { pl: 43, bulb: true, folder: true, name: '流线驱动' },
    { pl: 61, bulb: true, op: true, name: 'CONTOUR_ARE...', purple: true, tool: 'D6R3', drill: true, check: true },
    { pl: 43, bulb: true, folder: true, name: '曲面驱动' },
    { pl: 62, bulb: true, op: true, name: 'CONTOUR_ARE...', tool: 'D6R3', check: true },
];

function NavTable() {
    const rows = Array.from({ length: 32 }, (_, i) => ROWS[i] || {});
    return (
        <div className="flex h-[664px] w-[540px] flex-col border border-[#808080] bg-white">
            <div className="flex h-[22px] shrink-0 border-b border-[#8f8f8f] bg-gradient-to-b from-[#f2f3f3] to-[#d6d8d8] text-[12px] leading-[21px] text-[#222]">
                <span className="w-[201px] border-r border-[#c0c0c0] pl-[6px]">名称</span>
                <span className="w-[100px] border-r border-[#c0c0c0] pl-[5px]">换刀</span>
                <span className="w-[100px] border-r border-[#c0c0c0] pl-[5px]">刀轨</span>
                <span className="flex-1 pl-[5px]">刀具</span>
            </div>
            <div className="relative flex-1 overflow-hidden">
                {rows.map((r, i) => (
                    <div key={i} className={`flex h-[20px] border-b border-[#e8e8e8] text-[12px] leading-[19px] ${i % 2 ? 'bg-[#f7f7f7]' : 'bg-white'}`}>
                        <div className="flex w-[201px] items-center gap-[3px] border-r border-black" style={{ paddingLeft: r.pl || 0 }}>
                            {r.bulb && <span className="mr-[2px] flex"><BulbIcon /></span>}
                            {r.folder && <FolderIcon />}
                            {r.op && <OpIcon />}
                            <span className={r.purple ? 'ml-[1px] text-[#7a3fd8]' : 'text-[#222]'}>{r.name}</span>
                        </div>
                        <div className="flex w-[100px] items-center border-r border-[#e8e8e8] pl-[9px]">
                            {r.drill && <svg width="7" height="14" viewBox="0 0 7 14"><rect width="7" height="14" fill="#3a3fb0" /><path d="M0 3l7-2M0 6l7-2M0 9l7-2M0 12l7-2" stroke="#a4a8ee" /></svg>}
                        </div>
                        <div className="flex w-[100px] items-center border-r border-[#e8e8e8] pl-[6px]">{r.check && <CheckIcon />}</div>
                        <div className={`flex-1 pl-[5px] ${r.purple ? 'text-[#7a3fd8]' : 'text-[#222]'}`}>{r.tool}</div>
                    </div>
                ))}
                {/* dotted tree lines over the name column */}
                <svg className="pointer-events-none absolute left-0 top-0" width="110" height="140" viewBox="0 0 110 140">
                    <g stroke="#8a8a8a" strokeDasharray="1 1" fill="none">
                        <path d="M10 30h11M10 30v15M15 50h6M29 58v50M34 70h6M48 72v18h9M34 110h6M48 112v18h9" />
                    </g>
                    <g fill="#fff" stroke="#8a8a8a">
                        <rect x="5.500" y="45.500" width="9" height="9" rx="2" />
                        <rect x="24.500" y="65.500" width="9" height="9" rx="2" />
                        <rect x="24.500" y="105.500" width="9" height="9" rx="2" />
                    </g>
                    <path d="M7.500 50h5M26.500 70h5M26.500 110h5" stroke="#111" />
                </svg>
            </div>
            <div className="flex h-[17px] shrink-0 items-center bg-[#ececec] px-[2px]">
                <div className="mr-[4px] ml-[5px] h-0 w-0 border-y-[4px] border-r-[4px] border-y-transparent border-r-black" />
                <div className="ml-[4px] flex h-[15px] w-[182px] items-center justify-center rounded-[2px] border border-[#9a9a9a] bg-gradient-to-b from-[#e8e8e8] to-[#bcbcbc] text-[9px] leading-none text-[#444]">Ⅲ</div>
                <div className="ml-auto mr-[6px] h-0 w-0 border-y-[4px] border-l-[4px] border-y-transparent border-l-black" />
            </div>
        </div>
    );
}

const Section = ({ label }) => (
    <div className="flex h-[23px] border-b border-[#8a8a8a] bg-gradient-to-b from-[#f6f7f7] to-[#d2d5d5]">
        <span className="flex-1 pl-[6px] text-[12px] leading-[24px] text-[#153a78]">{label}</span>
        <div className="flex w-[22px] items-center justify-center border-l border-[#9a9a9a]">
            <svg width="12" height="10" viewBox="0 0 12 10"><path d="M1 1l5 7 5-7" fill="none" stroke="#555" strokeWidth="2.600" /></svg>
        </div>
    </div>
);

// the solid in the viewport, drawn in page coordinates
function Model() {
    return (
        <svg className="absolute left-0 top-0" width="1268" height="761" viewBox="633 183 1268 761">
            <defs>
                <linearGradient id="filL" x1="0" y1="0" x2="1" y2="0"><stop offset="0" stopColor="#b67200" /><stop offset=".55" stopColor="#c47c04" /><stop offset=".75" stopColor="#a86600" /><stop offset="1" stopColor="#aa6800" /></linearGradient>
                <linearGradient id="filR" x1="0" y1="0" x2="1" y2="0"><stop offset="0" stopColor="#aa6800" /><stop offset=".6" stopColor="#c07a02" /><stop offset="1" stopColor="#c88000" /></linearGradient>
                <pattern id="hStripe" width="6" height="6" patternUnits="userSpaceOnUse"><rect width="6" height="6" fill="#ffe800" /><rect y="4" width="6" height="2" fill="#ffac00" /></pattern>
                <pattern id="rStripe" width="6" height="6" patternUnits="userSpaceOnUse" patternTransform="rotate(-65)"><rect width="6" height="6" fill="#ffe800" /><rect x="4" width="2" height="6" fill="#ffa800" /></pattern>
                <pattern id="cStripe" width="4" height="4" patternUnits="userSpaceOnUse" patternTransform="rotate(35)"><rect width="4" height="4" fill="#ffe800" /><rect y="3" width="4" height="1" fill="#ffac00" /></pattern>
                <clipPath id="floorClip"><path d="M971 423L1159 423Q1176 424 1184 430L1200 462 994 463Q978 458 969 447Z" /></clipPath>
            </defs>
            {/* faces */}
            <path d="M848 377L903 482 869 713 814 610Z" fill="#bb7400" />
            <path d="M903 482Q915 493 939 495L906 728Q880 726 869 713Z" fill="url(#filL)" />
            <path d="M939 495L1297 489 1263 723 906 728Z" fill="#aa6600" />
            <path d="M1297 489Q1316 487 1319 480L1285 712Q1278 722 1263 723Z" fill="url(#filR)" />
            {/* top */}
            <path d="M848 374Q852 365 866 364L1237 359Q1252 361 1260 372L1317 475Q1321 484 1298 486L939 494Q915 492 903 480Z" fill="#ffc800" stroke="#3b3b38" strokeWidth=".8" />
            <path d="M850 379L903 482Q915 493 939 496L1298 489Q1316 487 1319 481" fill="none" stroke="#ffe83a" strokeWidth="1.800" />
            {/* pocket */}
            <path d="M932 402Q934 392 948 388Q958 385 969 385L1159 383Q1178 383 1191 388Q1208 394 1216 405L1232 440Q1238 452 1228 458Q1220 464 1212 464L1009 468Q990 468 976 462Q962 456 955 448L934 412Q931 407 932 402Z" fill="url(#hStripe)" stroke="#3b3b38" strokeWidth=".8" />
            <path d="M932 402Q934 392 948 388Q958 385 969 385L971 423 960 415Q945 405 933 410Z" fill="url(#cStripe)" />
            <path d="M1159 383Q1178 383 1191 388Q1208 394 1216 405Q1196 412 1184 430Q1176 424 1159 423Z" fill="url(#cStripe)" />
            <path d="M1216 405L1234 445 1200 462 1184 430Q1200 415 1216 405Z" fill="url(#rStripe)" />
            <path d="M934 412L955 448 968 446 960 415Q945 405 934 412Z" fill="url(#rStripe)" />
            <path d="M971 423L1159 423Q1176 424 1184 430L1200 462 994 463Q978 458 969 447Z" fill="#bdb800" />
            <g clipPath="url(#floorClip)" fill="#b87400">
                <path d="M966 420H982L976 460H966Z" />
                <path d="M1156 420H1178L1190 462H1152Z" />
                <path d="M976 424h60l-8 6 14 6-20 2-8-8-18 8-14-3zM984 442q12-6 24-2 10 6 26 4t22 6q14-4 28-6 16-2 22 0-6 8-24 10-16 6-34 4-20 2-30 0-20-4-34-8z" />
                <path d="M1040 426q14 2 20 8 14-6 28-8l20-2-10 8q-16 6-30 10-16 0-20-6z" />
                <path d="M1100 424l14 2-6 4zM1058 455l40 0-8 8-44 1zM1122 444l20 4-20 10z" />
            </g>
            <path d="M976 462Q990 466 1009 466L1212 462" fill="none" stroke="#ffb400" strokeWidth="3" />
            <g fill="none" stroke="#33332f" strokeWidth=".8">
                <path d="M971 423L1159 423Q1176 424 1184 430L1200 462M969 447Q978 458 994 463L1200 462" />
                <path d="M969 385Q974 405 971 423L969 447M1159 383Q1162 405 1159 423L1155 462M1184 430Q1176 450 1176 462" />
                <path d="M933 410Q948 403 960 415Q966 425 971 423M1216 405Q1196 412 1184 430M955 448Q964 444 976 456M1234 445Q1212 448 1200 462M1009 468L1005 462" />
            </g>
            {/* edges */}
            <g fill="none" stroke="#3b3b38" strokeWidth=".9">
                <path d="M848 377L814 610 869 713Q880 726 906 728L1263 723Q1278 722 1285 712L1319 480" />
                <path d="M903 482L869 713M939 495L906 728M1297 489L1263 723" />
            </g>
            {/* work and machine axes */}
            <path d="M805 600L818 510" stroke="#0a2fc0" strokeWidth="1" />
            <path d="M818 509l4 23-4-1-5 1zM811 551l3 19-7 8 0-14z" fill="#0a30c0" />
            <path d="M805 600H906" stroke="#7fc080" strokeWidth="1.400" />
            <path d="M835 596l25 2-14 3zM884 592l23 6-23 5 3-6zM806 600h12" fill="#bfe6be" stroke="#3aa048" strokeWidth=".6" />
            <path d="M805 600l27 50" stroke="#d83a3a" strokeWidth="1.200" />
            <path d="M810 612l11 14-4 5zM823 634l10 15-7-6z" fill="#e04848" />
            <g fontSize="14">
                <text x="798" y="509" fill="#2b5be8">ZM</text>
                <text x="794" y="551" fill="#2b5be8">ZC</text>
                <text x="843" y="595" fill="#2f9a3e">YC</text>
                <text x="887" y="595" fill="#2f9a3e">YM</text>
                <text x="803" y="638" fill="#d8404a">XC</text>
                <text x="813" y="661" fill="#d8404a">XM</text>
            </g>
            {/* absolute triad bottom left */}
            <path d="M698 858L721 858 728 871 723 892 700 888 693 880Z" fill="#cfcfcf" fillOpacity=".7" stroke="#b5b5b5" />
            <path d="M698 858l6 13h24M704 871l-4 17" fill="none" stroke="#b5b5b5" />
            <path d="M694 880H724" stroke="#a8c8a8" strokeWidth="3" />
            <path d="M726 876l8 4-8 4z" fill="#2f9a3e" />
            <path d="M693 880l4-29" stroke="#1040c8" strokeWidth="3" />
            <path d="M698 845l4 11h-9z" fill="#1040c8" />
            <path d="M693 880l10 16" stroke="#e04040" strokeWidth="3" />
            <path d="M705 901l-8-7 6-4z" fill="#e04040" />
            <circle cx="693" cy="880" r="3.500" fill="#e8e8e8" stroke="#999" />
            <g fontSize="12">
                <text x="696" y="845" fill="#2b5be8">Z</text>
                <text x="735" y="885" fill="#2f9a3e">Y</text>
                <text x="703" y="908" fill="#d8404a">X</text>
            </g>
        </svg>
    );
}

const MenuLabel = ({ label, mnemonic }) => (
    <span className="whitespace-nowrap">
        {label}{mnemonic && <>(<u>{mnemonic}</u>)</>}
    </span>
);

export default function App() {
    return (
        <div className="relative flex h-[977px] w-[1901px] flex-col overflow-hidden bg-[#d4d4d4] font-['Liberation_Sans','Noto_Sans_CJK_SC',sans-serif] text-[12px]">
            {/* ── Title bar ── */}
            <div className="flex h-[21px] shrink-0 items-center border-b border-black bg-[#1a1a1a] pl-[2px]">
                <svg width="18" height="18" viewBox="0 0 24 24" className="mr-[2px]">{I.logo}</svg>
                <span className="text-[12px] text-[#efefef]">NX 10.0.0.24 - 加工 - [qiu_zhu.prt]</span>
                <span className="ml-auto mr-[26px] text-[12px] font-bold tracking-[.8px] text-white">SIEMENS</span>
                <div className="flex items-start gap-[4px] self-start">
                    <div className="flex h-[17px] w-[18px] items-end justify-center rounded-b-[2px] border border-t-0 border-[#666] bg-[#3a3a3a] pb-[3px]"><div className="h-[2px] w-[7px] bg-white" /></div>
                    <div className="flex h-[17px] w-[18px] items-center justify-center rounded-b-[2px] border border-t-0 border-[#666] bg-[#3a3a3a]"><div className="h-[8px] w-[9px] border border-t-2 border-white" /></div>
                    <div className="h-[17px] w-[3px] bg-[#d9531e]" />
                </div>
            </div>

            {/* ── Menu bar ── */}
            <div className="flex h-[28px] shrink-0 items-center border-b border-[#b8b8b8] bg-gradient-to-b from-[#e9e9e9] to-[#dcdcdc] pl-[3px]">
                <svg width="20" height="20" viewBox="0 0 24 24" className="mr-[7px]"><path d="M3 3v20" stroke="#999" strokeDasharray="1 2" strokeWidth="2" /><Drill x="9" y="4" w="4" h="15" /><Fan x="13" y="7" /></svg>
                <div className="flex gap-[12.500px] text-black">
                    {MENU_A.map(([label, key]) => <MenuLabel key={label} label={label} mnemonic={key} />)}
                </div>
                <div className="ml-[22px] flex gap-[13px] text-black">
                    {MENU_B.map(([label, key]) => <MenuLabel key={label} label={label} mnemonic={key} />)}
                </div>
                <div className="ml-auto flex gap-[3px]">
                    <div className="flex h-[15px] w-[17px] items-end justify-center rounded-[3px] border border-[#777] bg-[#eee] pb-[2px]"><div className="h-[2px] w-[8px] bg-[#333]" /></div>
                    <div className="flex h-[15px] w-[17px] items-center justify-center rounded-[3px] border border-[#777] bg-[#eee]"><div className="h-[7px] w-[8px] border border-t-2 border-[#333]" /></div>
                    <div className="h-[15px] w-[4px] rounded-l-[3px] border border-r-0 border-[#777] bg-[#eee]" />
                </div>
            </div>

            {/* ── Toolbars ── */}
            <Toolbar spec={ROW1} className="h-[33px] shrink-0 border-b border-[#b2b2b2] bg-gradient-to-b from-[#dadada] to-[#cccccc]" />
            <Toolbar spec={ROW2} className="h-[34px] shrink-0 border-b border-[#b2b2b2] bg-gradient-to-b from-[#dadada] to-[#cccccc] pt-[2px]" />
            <Toolbar spec={ROW3} className="h-[35px] shrink-0 border-b border-[#9c9c9c] bg-gradient-to-b from-[#dadada] to-[#cccccc] pt-[2px]" />
            <Toolbar spec={ROW4} size={20} className="h-[32px] shrink-0 border-b border-[#a0a0a0] bg-gradient-to-b from-[#dadada] to-[#c6c6c6]" />

            {/* ── Main ── */}
            <div className="flex h-[761px] shrink-0">
                {/* left tab strip */}
                <div className="flex w-[31px] shrink-0 flex-col items-start bg-gradient-to-b from-[#a8a8a8] to-[#b4b4b4] pl-[3px]">
                    <div className="flex h-[47px] w-[26px] items-start justify-center pt-[7px]">
                        <svg width="16" height="16" viewBox="0 0 24 24"><circle cx="12" cy="12" r="7" fill="none" stroke="#222" strokeWidth="3" /><path d="M12 1v4M12 19v4M1 12h4M19 12h4M4 4l3 3M17 17l3 3M20 4l-3 3M7 17l-3 3" stroke="#222" strokeWidth="2.500" /></svg>
                    </div>
                    {LEFT_TABS.map(t => (
                        <div
                            key={t.k}
                            className={`flex shrink-0 items-center justify-center rounded-l-[4px] border border-r-0 ${t.m} ${t.on ? '-ml-[2px] h-[46px] w-[30px] border-[#a0a0a0] bg-[#efefef]' : 'h-[40px] w-[27px] border-[#808080] bg-[#d6d6d6]'}`}
                        >
                            <svg width="24" height="24" viewBox="0 0 24 24" className="overflow-visible">{TabIcon[t.k]}</svg>
                        </div>
                    ))}
                </div>

                {/* navigator panel */}
                <div className="flex h-[760px] w-[555px] shrink-0 flex-col border-b border-r border-[#909090] bg-[#ececec] pl-[6px]">
                    <div className="flex h-[32px] shrink-0 items-center justify-between pr-[14px]">
                        <span className="pl-[5px] text-[12px] font-medium text-[#111]">工序导航器 - 程序顺序</span>
                        <div className="h-[12px] w-[13px] border border-t-2 border-black bg-white" />
                    </div>
                    <NavTable />
                    <div className="flex h-[13px] w-[540px] shrink-0 items-center">
                        <div className="h-px flex-1 bg-[#a8a8a8]" />
                        <div className="mx-[5px] h-[6px] w-[100px] rounded-[1px] border border-[#a0a0a0] bg-[#c4c4c4]" />
                        <div className="h-px w-[214px] bg-[#a8a8a8]" />
                    </div>
                    <div className="flex w-[539px] flex-col gap-px">
                        <Section label="相依性" />
                        <Section label="细节" />
                    </div>
                </div>

                {/* vertical toolbar */}
                <div className="ml-px flex h-[586px] w-[46px] shrink-0 flex-col items-start border-x border-[#c8c8c8] bg-gradient-to-b from-[#e2e2e2] to-[#cfcfcf]">
                    <div className="ml-[7px] mb-[3px] mt-[10px] w-[34px] border-t-2 border-dotted border-[#999]" />
                    {VT.map(([k, c], i) => (
                        <div key={i} className="flex h-[31px] w-full shrink-0 items-center">
                            {c === 2 ? (
                                <div className="ml-[2px] flex h-[30px] w-[42px] items-center rounded-[3px] border border-[#a0a0a0] bg-[#dedede]">
                                    <span className="ml-[3px] w-[27px]"><Icon k={k} size={24} /></span>
                                    <span className="flex h-full flex-1 items-center justify-center border-l border-[#a0a0a0]"><Caret /></span>
                                </div>
                            ) : c ? (
                                <>
                                    <span className="ml-[5px]"><Icon k={k} size={24} /></span>
                                    <span className="ml-[6px]"><Caret /></span>
                                </>
                            ) : (
                                <span className="ml-[12px]"><Icon k={k} size={24} /></span>
                            )}
                        </div>
                    ))}
                    <div className="ml-[8px] mt-[1px] flex h-[30px] w-[30px] items-center justify-center rounded-[3px] border border-[#555] bg-white"><Icon k="clockG" size={22} /></div>
                    <div className="ml-[12px] mt-[3px]"><Icon k="vRefresh" size={24} /></div>
                    <div className="ml-[7px] mt-[5px] h-0 w-0 border-y-[3px] border-r-[4px] border-y-transparent border-r-black" />
                </div>

                {/* viewport */}
                <div className="relative flex-1 bg-[linear-gradient(180deg,#b5b6b8_0%,#cfd0d2_35%,#e2e3e5_72%,#e6e7e9_100%)]">
                    <Model />
                </div>
            </div>

            {/* ── Bottom toolbar ── */}
            <Toolbar spec={ROW5} className="h-[33px] shrink-0 border-t border-[#f4f4f4] bg-gradient-to-b from-[#dedede] to-[#cdcdcd]" />

            {/* ── Watermark over the corner ── */}
            <div className="pointer-events-none absolute bottom-[12px] left-[1619px] flex items-center gap-[10px]">
                <svg width="71" height="82" viewBox="0 0 71 82">
                    <path d="M35.500 0L71 20v41L35.500 82 0 61V20z" fill="#7cc8ef" fillOpacity=".72" />
                    <path d="M35.500 0C55 10 62 40 50 62M0 20c20-8 48-4 71 0M0 61C10 40 20 25 35 18" stroke="#fff" strokeOpacity=".55" fill="none" />
                    <path d="M35.500 20L55 31v22L35.500 64 16 53V31z" fill="none" stroke="#e6eef2" strokeWidth="5" />
                    <path d="M35.500 24L51 33l-15.500 9L20 33z" fill="#a5daf4" />
                    <path d="M35.500 42L51 33v18L35.500 60z" fill="#72bde8" />
                    <path d="M35.500 42L20 33v18l15.500 9z" fill="#8ccdee" />
                </svg>
                <div className="flex flex-col items-start text-white/45">
                    <span className="text-[40px] font-bold leading-[42px] tracking-[2px]">3D世界网</span>
                    <span className="mt-[3px] text-[15px] leading-[16px] tracking-[3.800px]">WWW.3DSJW.COM</span>
                </div>
            </div>
        </div>
    );
}
